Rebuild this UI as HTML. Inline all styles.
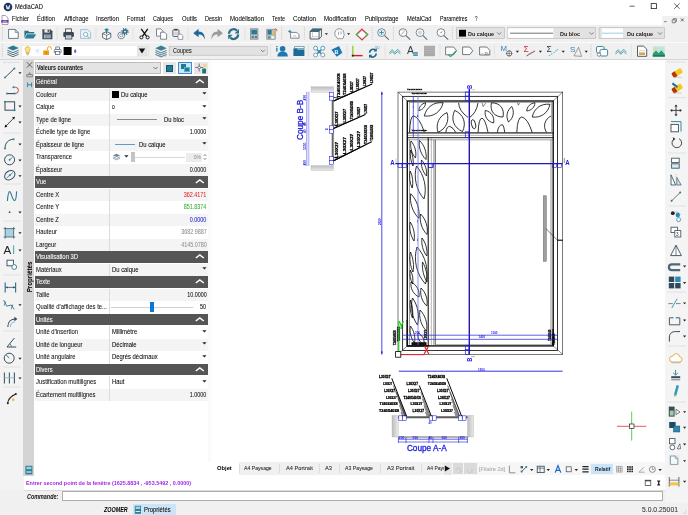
<!DOCTYPE html>
<html lang="fr"><head><meta charset="utf-8"><title>MédiaCAD</title><style>
html,body{margin:0;padding:0;background:#fff}
.t{-webkit-text-stroke:.06px currentColor}
body{width:688px;height:515px;position:relative;overflow:hidden;font-family:"Liberation Sans",sans-serif}
.a{position:absolute;display:block}
.t{position:absolute;white-space:nowrap;display:block}
#w{position:absolute;left:0;top:0;width:688px;height:515px;will-change:transform}
svg{overflow:visible}
svg text{font-family:"Liberation Sans",sans-serif}
</style></head><body>
<div id="w">
<div class="a" style="left:0px;top:0px;width:688px;height:24.5px;background:#fff;"></div>
<div class="a" style="left:0px;top:24.5px;width:688px;height:35px;background:#f0f0f0;"></div>
<div class="a" style="left:0px;top:41.7px;width:688px;height:0.6px;background:#d9d9d9;"></div>
<div class="a" style="left:0px;top:42.3px;width:688px;height:0.6px;background:#fbfbfb;"></div>
<div class="a" style="left:0px;top:59.3px;width:688px;height:0.7px;background:#d5d5d5;"></div>
<div class="a" style="left:0px;top:60px;width:23.5px;height:443px;background:#f3f3f3;"></div>
<div class="a" style="left:23.3px;top:60px;width:11.1px;height:415.5px;background:#d4d4d4;"></div>
<div class="a" style="left:34.5px;top:60px;width:173.7px;height:415.5px;background:#fff;"></div>
<div class="a" style="left:208.2px;top:60px;width:2.6px;height:402px;background:#fafafa;"></div>
<div class="a" style="left:665.4px;top:60px;width:22.6px;height:443px;background:#f4f4f4;"></div>
<div class="a" style="left:0px;top:503px;width:688px;height:12px;background:#f0f0f0;"></div>
<div class="a" style="left:0px;top:490.2px;width:665.4px;height:12.8px;background:#f0f0f0;"></div>
<div class="a" style="left:23.5px;top:475.5px;width:641.9px;height:14.5px;background:#fff;"></div>
<div class="a" style="left:23.5px;top:489.8px;width:641.9px;height:0.5px;background:#dcdcdc;"></div>
<div class="a" style="left:210.8px;top:462.3px;width:454.6px;height:12.4px;background:#f0f0f0;"></div>
<div class="a" style="left:452.4px;top:462.3px;width:213px;height:12.4px;background:#f6f6f6;"></div>
<svg class="a" style="left:3px;top:1.5px;" width="10" height="10" viewBox="0 0 10 10"><circle cx="5" cy="5" r="4.3" fill="#1d3465"/><path d="M3.2 3 L4.2 7.2 L5 4.6 L5.8 7.2 L6.8 3" stroke="#fff" stroke-width="0.9" fill="none"/></svg>
<span class="t" style="top:4.03px;font-size:6.4px;line-height:6.4px;color:#000;left:15.00px;transform:scaleX(0.9);transform-origin:left center;">MédiaCAD</span>
<svg class="a" style="left:625px;top:0px;" width="63" height="13" viewBox="0 0 63 13"><path d="M4.5 6.2h5.2" stroke="#222" stroke-width="0.7"/><rect x="26.2" y="3.6" width="5.2" height="5" fill="none" stroke="#222" stroke-width="0.8"/><path d="M49.2 3.4l5.4 5.4M54.6 3.4l-5.4 5.4" stroke="#222" stroke-width="0.7"/></svg>
<svg class="a" style="left:0.5px;top:14.5px;" width="8" height="10" viewBox="0 0 8 10"><path d="M1 .5h3.6l2.4 2.4v6.6h-6z" fill="#fff" stroke="#6a5aa0" stroke-width="0.6"/><rect x=".3" y="5" width="7.2" height="2.6" fill="#6a3fa0"/><path d="M2 6.3h3.8" stroke="#fff" stroke-width=".6"/></svg>
<span class="t" style="top:16.45px;font-size:6.5px;line-height:6.5px;color:#000;left:12.00px;transform:scaleX(0.871);transform-origin:left center;">Fichier</span>
<span class="t" style="top:16.45px;font-size:6.5px;line-height:6.5px;color:#000;left:37.00px;transform:scaleX(0.906);transform-origin:left center;">Édition</span>
<span class="t" style="top:16.45px;font-size:6.5px;line-height:6.5px;color:#000;left:63.50px;transform:scaleX(0.908);transform-origin:left center;">Affichage</span>
<span class="t" style="top:16.45px;font-size:6.5px;line-height:6.5px;color:#000;left:96.00px;transform:scaleX(0.922);transform-origin:left center;">Insertion</span>
<span class="t" style="top:16.45px;font-size:6.5px;line-height:6.5px;color:#000;left:127.00px;transform:scaleX(0.874);transform-origin:left center;">Format</span>
<span class="t" style="top:16.45px;font-size:6.5px;line-height:6.5px;color:#000;left:153.00px;transform:scaleX(0.838);transform-origin:left center;">Calques</span>
<span class="t" style="top:16.45px;font-size:6.5px;line-height:6.5px;color:#000;left:182.00px;transform:scaleX(0.902);transform-origin:left center;">Outils</span>
<span class="t" style="top:16.45px;font-size:6.5px;line-height:6.5px;color:#000;left:205.00px;transform:scaleX(0.855);transform-origin:left center;">Dessin</span>
<span class="t" style="top:16.45px;font-size:6.5px;line-height:6.5px;color:#000;left:230.00px;transform:scaleX(0.932);transform-origin:left center;">Modélisation</span>
<span class="t" style="top:16.45px;font-size:6.5px;line-height:6.5px;color:#000;left:272.00px;transform:scaleX(0.836);transform-origin:left center;">Texte</span>
<span class="t" style="top:16.45px;font-size:6.5px;line-height:6.5px;color:#000;left:293.00px;transform:scaleX(0.950);transform-origin:left center;">Cotation</span>
<span class="t" style="top:16.45px;font-size:6.5px;line-height:6.5px;color:#000;left:324.00px;transform:scaleX(0.937);transform-origin:left center;">Modification</span>
<span class="t" style="top:16.45px;font-size:6.5px;line-height:6.5px;color:#000;left:365.00px;transform:scaleX(0.891);transform-origin:left center;">Publipostage</span>
<span class="t" style="top:16.45px;font-size:6.5px;line-height:6.5px;color:#000;left:406.50px;transform:scaleX(0.880);transform-origin:left center;">MétalCad</span>
<span class="t" style="top:16.45px;font-size:6.5px;line-height:6.5px;color:#000;left:439.50px;transform:scaleX(0.818);transform-origin:left center;">Paramètres</span>
<span class="t" style="top:16.45px;font-size:6.5px;line-height:6.5px;color:#000;left:475.00px;transform:scaleX(0.690);transform-origin:left center;">?</span>
<div class="a" style="left:661.5px;top:15.5px;width:26.5px;height:9px;background:#f1f1f1;"></div>
<svg class="a" style="left:661px;top:15px;" width="27" height="10" viewBox="0 0 27 10"><path d="M3.2 6.6h2.4" stroke="#444" stroke-width=".7"/><path d="M11.2 4.8h3v3h-3zM12.4 4.8v-1.2h3v3h-1.2" fill="none" stroke="#345" stroke-width=".6"/><path d="M19.8 3.4l3 3M22.8 3.4l-3 3" stroke="#333" stroke-width=".7"/></svg>
<div class="a" style="left:35px;top:61.8px;width:125.8px;height:12.4px;background:#e4e4e4;border:0.5px solid #bdbdbd;box-sizing:border-box;"></div>
<span class="t" style="top:64.93px;font-size:6.4px;line-height:6.4px;color:#111;font-weight:bold;-webkit-text-stroke:0;left:36.80px;transform:scaleX(0.835);transform-origin:left center;">Valeurs courantes</span>
<svg class="a" style="left:152px;top:65.3px;" width="7" height="6" viewBox="0 0 7 6"><path d="M1.5 2l2 2 2-2" fill="none" stroke="#444" stroke-width=".7"/></svg>
<div class="a" style="left:163px;top:62px;width:12.6px;height:12.2px;background:#e6e6e6;"></div>
<div class="a" style="left:165.8px;top:64.8px;width:7px;height:7px;background:#1f7a96;border:0.7px solid #16566b;box-sizing:border-box;"></div>
<div class="a" style="left:178px;top:61.6px;width:14px;height:12.8px;background:#cfe6f7;border:0.7px solid #3c8dd0;box-sizing:border-box;"></div>
<div class="a" style="left:180.6px;top:63.6px;width:5.6px;height:5.2px;background:#1f7a96;"></div>
<div class="a" style="left:184.4px;top:67.2px;width:5.6px;height:5.2px;background:#1f7a96;border:0.5px solid #5fb0c8;box-sizing:border-box"></div>
<div class="a" style="left:193.8px;top:62px;width:13.8px;height:12.2px;background:#e9e6ea;"></div>
<svg class="a" style="left:194px;top:61.8px;" width="14" height="13" viewBox="0 0 14 13"><path d="M5.2 1.5v8M1.2 5.5h8" stroke="#333" stroke-width=".6"/><circle cx="5.2" cy="5.5" r="1.3" fill="#fff" stroke="#333" stroke-width=".5"/><rect x="8.2" y="6.4" width="3.8" height="5" rx=".6" fill="#177a72"/><rect x="9" y="2" width="3.6" height="3" fill="#f3cf7a" opacity=".8"/></svg>
<svg class="a" style="left:24.5px;top:60.5px;" width="9" height="8" viewBox="0 0 9 8"><path d="M1.8 1.2l5.4 5.4M7.2 1.2l-5.4 5.4" stroke="#444" stroke-width=".8"/></svg>
<svg class="a" style="left:24.5px;top:70px;" width="9" height="8" viewBox="0 0 9 8"><path d="M1.8 6.8h5.6v-2.2h-5.6zM3.6 4.6l1-2 1 2" fill="none" stroke="#555" stroke-width=".6"/></svg>
<svg class="a" style="left:24.5px;top:80px;" width="9" height="9" viewBox="0 0 9 9"><path d="M2.6 2.5v4.6M6.6 2.5v4.6M2.6 4.8h4" stroke="#2e8aa5" stroke-width="1"/></svg>
<svg class="a" style="left:24.3px;top:465px;" width="10" height="10" viewBox="0 0 10 10"><rect x="1.4" y=".8" width="7" height="8.6" fill="#2f7f97"/><rect x="2.4" y="1.8" width="5" height="2.4" fill="#9ed0de"/><rect x="2.4" y="6.4" width="5" height="1.2" fill="#d7eef4"/></svg>
<span class="t" style="left:29.6px;top:277px;font-size:7.4px;line-height:8px;font-weight:bold;color:#000;transform:translate(-50%,-50%) rotate(-90deg) scaleX(.84);transform-origin:center">Propriétés</span>
<div class="a" style="left:34.8px;top:76.2px;width:173.3px;height:11.7px;background:#555555;"></div>
<span class="t" style="top:79.23px;font-size:6.4px;line-height:6.4px;color:#fff;left:36.30px;transform:scaleX(0.92);transform-origin:left center;">Général</span>
<svg class="a" style="left:194.8px;top:79.3px;" width="10" height="5.2" viewBox="0 0 10 5.2"><path d="M.8 4l4-3 4 3" fill="none" stroke="#fff" stroke-width="1.5"/></svg>
<div class="a" style="left:34.8px;top:88.5px;width:173.3px;height:12.5px;background:#f4f4f4;"></div>
<span class="t" style="top:91.73px;font-size:6.4px;line-height:6.4px;color:#111;left:36.30px;transform:scaleX(0.92);transform-origin:left center;">Couleur</span>
<div class="a" style="left:112.4px;top:91.10000000000001px;width:7px;height:7px;background:#000;"></div>
<span class="t" style="top:91.73px;font-size:6.4px;line-height:6.4px;color:#000;left:121.00px;transform:scaleX(0.92);transform-origin:left center;">Du calque</span>
<svg class="a" style="left:201.6px;top:92.2px;" width="5" height="3" viewBox="0 0 5 3"><path d="M.3 .3h4.2l-2.1 2.3z" fill="#222"/></svg>
<div class="a" style="left:109.4px;top:88.5px;width:0.5px;height:12.5px;background:#dcdcdc;"></div>
<div class="a" style="left:34.8px;top:101.0px;width:173.3px;height:12.5px;background:#fff;"></div>
<span class="t" style="top:104.23px;font-size:6.4px;line-height:6.4px;color:#111;left:36.30px;transform:scaleX(0.92);transform-origin:left center;">Calque</span>
<span class="t" style="top:105.08px;font-size:5.4px;line-height:5.4px;color:#000;left:112.00px;transform:scaleX(0.92);transform-origin:left center;">0</span>
<svg class="a" style="left:201.6px;top:104.7px;" width="5" height="3" viewBox="0 0 5 3"><path d="M.3 .3h4.2l-2.1 2.3z" fill="#222"/></svg>
<div class="a" style="left:109.4px;top:101.0px;width:0.5px;height:12.5px;background:#dcdcdc;"></div>
<div class="a" style="left:34.8px;top:113.5px;width:173.3px;height:12.5px;background:#f4f4f4;"></div>
<span class="t" style="top:116.73px;font-size:6.4px;line-height:6.4px;color:#111;left:36.30px;transform:scaleX(0.92);transform-origin:left center;">Type de ligne</span>
<div class="a" style="left:117px;top:119.2px;width:40px;height:1px;background:#8a8a8a;"></div>
<span class="t" style="top:116.73px;font-size:6.4px;line-height:6.4px;color:#000;left:164.00px;transform:scaleX(0.92);transform-origin:left center;">Du bloc</span>
<svg class="a" style="left:201.6px;top:117.2px;" width="5" height="3" viewBox="0 0 5 3"><path d="M.3 .3h4.2l-2.1 2.3z" fill="#222"/></svg>
<div class="a" style="left:109.4px;top:113.5px;width:0.5px;height:12.5px;background:#dcdcdc;"></div>
<div class="a" style="left:34.8px;top:126.0px;width:173.3px;height:12.5px;background:#fff;"></div>
<span class="t" style="top:129.23px;font-size:6.4px;line-height:6.4px;color:#111;left:36.30px;transform:scaleX(0.92);transform-origin:left center;">Échelle type de ligne</span>
<span class="t" style="top:129.32px;font-size:6.3px;line-height:6.3px;color:#111;right:481.60px;transform:scaleX(0.86);transform-origin:right center;">1.0000</span>
<div class="a" style="left:109.4px;top:126.0px;width:0.5px;height:12.5px;background:#dcdcdc;"></div>
<div class="a" style="left:34.8px;top:138.5px;width:173.3px;height:12.5px;background:#f4f4f4;"></div>
<span class="t" style="top:141.73px;font-size:6.4px;line-height:6.4px;color:#111;left:36.30px;transform:scaleX(0.92);transform-origin:left center;">Épaisseur de ligne</span>
<div class="a" style="left:114.6px;top:144.39999999999998px;width:20px;height:0.7px;background:#5a9fd0;"></div>
<span class="t" style="top:141.73px;font-size:6.4px;line-height:6.4px;color:#000;left:138.80px;transform:scaleX(0.92);transform-origin:left center;">Du calque</span>
<svg class="a" style="left:201.6px;top:142.2px;" width="5" height="3" viewBox="0 0 5 3"><path d="M.3 .3h4.2l-2.1 2.3z" fill="#222"/></svg>
<div class="a" style="left:109.4px;top:138.5px;width:0.5px;height:12.5px;background:#dcdcdc;"></div>
<div class="a" style="left:34.8px;top:151.0px;width:173.3px;height:12.5px;background:#fff;"></div>
<span class="t" style="top:154.23px;font-size:6.4px;line-height:6.4px;color:#111;left:36.30px;transform:scaleX(0.92);transform-origin:left center;">Transparence</span>
<svg class="a" style="left:112px;top:153.2px;" width="9" height="8" viewBox="0 0 9 8"><path d="M4.5 .8l3.6 1.6-3.6 1.6L.9 2.4z" fill="#6f8796"/><path d="M.9 3.8l3.6 1.6 3.6-1.6M.9 5.2l3.6 1.6 3.6-1.6" fill="none" stroke="#6f8796" stroke-width=".7"/></svg>
<svg class="a" style="left:124px;top:155.0px;" width="5" height="3" viewBox="0 0 5 3"><path d="M.3 .3h4.2l-2.1 2.3z" fill="#222"/></svg>
<div class="a" style="left:135px;top:156.79999999999998px;width:50px;height:0.8px;background:#d8d8d8;"></div>
<div class="a" style="left:131.3px;top:152.2px;width:4px;height:10px;background:#c4c4c4;"></div>
<div class="a" style="left:186px;top:152.6px;width:16px;height:9.2px;background:#ececec;"></div>
<span class="t" style="top:154.91px;font-size:5.6px;line-height:5.6px;color:#999;right:487.00px;transform:scaleX(0.9);transform-origin:right center;">0%</span>
<svg class="a" style="left:202.5px;top:153.2px;" width="4" height="8" viewBox="0 0 4 8"><path d="M.6 3l1.4-1.6L3.4 3M.6 5l1.4 1.6L3.4 5" fill="none" stroke="#555" stroke-width=".6"/></svg>
<div class="a" style="left:109.4px;top:151.0px;width:0.5px;height:12.5px;background:#dcdcdc;"></div>
<div class="a" style="left:34.8px;top:163.5px;width:173.3px;height:12.5px;background:#f4f4f4;"></div>
<span class="t" style="top:166.73px;font-size:6.4px;line-height:6.4px;color:#111;left:36.30px;transform:scaleX(0.92);transform-origin:left center;">Épaisseur</span>
<span class="t" style="top:166.82px;font-size:6.3px;line-height:6.3px;color:#111;right:481.60px;transform:scaleX(0.86);transform-origin:right center;">0.0000</span>
<div class="a" style="left:109.4px;top:163.5px;width:0.5px;height:12.5px;background:#dcdcdc;"></div>
<div class="a" style="left:34.8px;top:176.2px;width:173.3px;height:11.7px;background:#555555;"></div>
<span class="t" style="top:179.23px;font-size:6.4px;line-height:6.4px;color:#fff;left:36.30px;transform:scaleX(0.92);transform-origin:left center;">Vue</span>
<svg class="a" style="left:194.8px;top:179.29999999999998px;" width="10" height="5.2" viewBox="0 0 10 5.2"><path d="M.8 4l4-3 4 3" fill="none" stroke="#fff" stroke-width="1.5"/></svg>
<div class="a" style="left:34.8px;top:188.5px;width:173.3px;height:12.5px;background:#f4f4f4;"></div>
<span class="t" style="top:191.73px;font-size:6.4px;line-height:6.4px;color:#111;left:36.30px;transform:scaleX(0.92);transform-origin:left center;">Centre X</span>
<span class="t" style="top:191.82px;font-size:6.3px;line-height:6.3px;color:#e0262c;right:481.60px;transform:scaleX(0.86);transform-origin:right center;">362.4171</span>
<div class="a" style="left:109.4px;top:188.5px;width:0.5px;height:12.5px;background:#dcdcdc;"></div>
<div class="a" style="left:34.8px;top:201.0px;width:173.3px;height:12.5px;background:#fff;"></div>
<span class="t" style="top:204.23px;font-size:6.4px;line-height:6.4px;color:#111;left:36.30px;transform:scaleX(0.92);transform-origin:left center;">Centre Y</span>
<span class="t" style="top:204.32px;font-size:6.3px;line-height:6.3px;color:#35b335;right:481.60px;transform:scaleX(0.86);transform-origin:right center;">851.8374</span>
<div class="a" style="left:109.4px;top:201.0px;width:0.5px;height:12.5px;background:#dcdcdc;"></div>
<div class="a" style="left:34.8px;top:213.5px;width:173.3px;height:12.5px;background:#f4f4f4;"></div>
<span class="t" style="top:216.73px;font-size:6.4px;line-height:6.4px;color:#111;left:36.30px;transform:scaleX(0.92);transform-origin:left center;">Centre Z</span>
<span class="t" style="top:216.82px;font-size:6.3px;line-height:6.3px;color:#2222dd;right:481.60px;transform:scaleX(0.86);transform-origin:right center;">0.0000</span>
<div class="a" style="left:109.4px;top:213.5px;width:0.5px;height:12.5px;background:#dcdcdc;"></div>
<div class="a" style="left:34.8px;top:226.0px;width:173.3px;height:12.5px;background:#fff;"></div>
<span class="t" style="top:229.23px;font-size:6.4px;line-height:6.4px;color:#111;left:36.30px;transform:scaleX(0.92);transform-origin:left center;">Hauteur</span>
<span class="t" style="top:229.32px;font-size:6.3px;line-height:6.3px;color:#909090;right:481.60px;transform:scaleX(0.86);transform-origin:right center;">3682.9887</span>
<div class="a" style="left:109.4px;top:226.0px;width:0.5px;height:12.5px;background:#dcdcdc;"></div>
<div class="a" style="left:34.8px;top:238.5px;width:173.3px;height:12.5px;background:#f4f4f4;"></div>
<span class="t" style="top:241.73px;font-size:6.4px;line-height:6.4px;color:#111;left:36.30px;transform:scaleX(0.92);transform-origin:left center;">Largeur</span>
<span class="t" style="top:241.82px;font-size:6.3px;line-height:6.3px;color:#909090;right:481.60px;transform:scaleX(0.86);transform-origin:right center;">4145.0780</span>
<div class="a" style="left:109.4px;top:238.5px;width:0.5px;height:12.5px;background:#dcdcdc;"></div>
<div class="a" style="left:34.8px;top:251.2px;width:173.3px;height:11.7px;background:#555555;"></div>
<span class="t" style="top:254.23px;font-size:6.4px;line-height:6.4px;color:#fff;left:36.30px;transform:scaleX(0.92);transform-origin:left center;">Visualisation 3D</span>
<svg class="a" style="left:194.8px;top:254.29999999999998px;" width="10" height="5.2" viewBox="0 0 10 5.2"><path d="M.8 4l4-3 4 3" fill="none" stroke="#fff" stroke-width="1.5"/></svg>
<div class="a" style="left:34.8px;top:263.5px;width:173.3px;height:12.5px;background:#f4f4f4;"></div>
<span class="t" style="top:266.73px;font-size:6.4px;line-height:6.4px;color:#111;left:36.30px;transform:scaleX(0.92);transform-origin:left center;">Matériaux</span>
<span class="t" style="top:266.73px;font-size:6.4px;line-height:6.4px;color:#000;left:112.00px;transform:scaleX(0.92);transform-origin:left center;">Du calque</span>
<svg class="a" style="left:201.6px;top:267.2px;" width="5" height="3" viewBox="0 0 5 3"><path d="M.3 .3h4.2l-2.1 2.3z" fill="#222"/></svg>
<div class="a" style="left:109.4px;top:263.5px;width:0.5px;height:12.5px;background:#dcdcdc;"></div>
<div class="a" style="left:34.8px;top:276.2px;width:173.3px;height:11.7px;background:#555555;"></div>
<span class="t" style="top:279.23px;font-size:6.4px;line-height:6.4px;color:#fff;left:36.30px;transform:scaleX(0.92);transform-origin:left center;">Texte</span>
<svg class="a" style="left:194.8px;top:279.3px;" width="10" height="5.2" viewBox="0 0 10 5.2"><path d="M.8 4l4-3 4 3" fill="none" stroke="#fff" stroke-width="1.5"/></svg>
<div class="a" style="left:34.8px;top:288.5px;width:173.3px;height:12.5px;background:#f4f4f4;"></div>
<span class="t" style="top:291.73px;font-size:6.4px;line-height:6.4px;color:#111;left:36.30px;transform:scaleX(0.92);transform-origin:left center;">Taille</span>
<span class="t" style="top:291.82px;font-size:6.3px;line-height:6.3px;color:#111;right:481.60px;transform:scaleX(0.86);transform-origin:right center;">10.0000</span>
<div class="a" style="left:109.4px;top:288.5px;width:0.5px;height:12.5px;background:#dcdcdc;"></div>
<div class="a" style="left:34.8px;top:301.0px;width:173.3px;height:12.5px;background:#fff;"></div>
<span class="t" style="top:304.23px;font-size:6.4px;line-height:6.4px;color:#111;left:36.30px;transform:scaleX(0.92);transform-origin:left center;">Qualité d&#x27;affichage des te...</span>
<div class="a" style="left:111px;top:306.8px;width:82px;height:0.8px;background:#d0d0d0;"></div>
<div class="a" style="left:149.6px;top:302.4px;width:4.6px;height:9.8px;background:#0a78d7;"></div>
<span class="t" style="top:304.32px;font-size:6.3px;line-height:6.3px;color:#000;right:481.60px;transform:scaleX(0.86);transform-origin:right center;">50</span>
<div class="a" style="left:109.4px;top:301.0px;width:0.5px;height:12.5px;background:#dcdcdc;"></div>
<div class="a" style="left:34.8px;top:313.7px;width:173.3px;height:11.7px;background:#555555;"></div>
<span class="t" style="top:316.73px;font-size:6.4px;line-height:6.4px;color:#fff;left:36.30px;transform:scaleX(0.92);transform-origin:left center;">Unités</span>
<svg class="a" style="left:194.8px;top:316.8px;" width="10" height="5.2" viewBox="0 0 10 5.2"><path d="M.8 4l4-3 4 3" fill="none" stroke="#fff" stroke-width="1.5"/></svg>
<div class="a" style="left:34.8px;top:326.0px;width:173.3px;height:12.5px;background:#fff;"></div>
<span class="t" style="top:329.23px;font-size:6.4px;line-height:6.4px;color:#111;left:36.30px;transform:scaleX(0.92);transform-origin:left center;">Unité d&#x27;insertion</span>
<span class="t" style="top:329.23px;font-size:6.4px;line-height:6.4px;color:#000;left:112.00px;transform:scaleX(0.92);transform-origin:left center;">Millimètre</span>
<svg class="a" style="left:201.6px;top:329.7px;" width="5" height="3" viewBox="0 0 5 3"><path d="M.3 .3h4.2l-2.1 2.3z" fill="#222"/></svg>
<div class="a" style="left:109.4px;top:326.0px;width:0.5px;height:12.5px;background:#dcdcdc;"></div>
<div class="a" style="left:34.8px;top:338.5px;width:173.3px;height:12.5px;background:#f4f4f4;"></div>
<span class="t" style="top:341.73px;font-size:6.4px;line-height:6.4px;color:#111;left:36.30px;transform:scaleX(0.92);transform-origin:left center;">Unité de longueur</span>
<span class="t" style="top:341.73px;font-size:6.4px;line-height:6.4px;color:#000;left:112.00px;transform:scaleX(0.92);transform-origin:left center;">Décimale</span>
<svg class="a" style="left:201.6px;top:342.2px;" width="5" height="3" viewBox="0 0 5 3"><path d="M.3 .3h4.2l-2.1 2.3z" fill="#222"/></svg>
<div class="a" style="left:109.4px;top:338.5px;width:0.5px;height:12.5px;background:#dcdcdc;"></div>
<div class="a" style="left:34.8px;top:351.0px;width:173.3px;height:12.5px;background:#fff;"></div>
<span class="t" style="top:354.23px;font-size:6.4px;line-height:6.4px;color:#111;left:36.30px;transform:scaleX(0.92);transform-origin:left center;">Unité angulaire</span>
<span class="t" style="top:354.23px;font-size:6.4px;line-height:6.4px;color:#000;left:112.00px;transform:scaleX(0.92);transform-origin:left center;">Degrés décimaux</span>
<svg class="a" style="left:201.6px;top:354.7px;" width="5" height="3" viewBox="0 0 5 3"><path d="M.3 .3h4.2l-2.1 2.3z" fill="#222"/></svg>
<div class="a" style="left:109.4px;top:351.0px;width:0.5px;height:12.5px;background:#dcdcdc;"></div>
<div class="a" style="left:34.8px;top:363.7px;width:173.3px;height:11.7px;background:#555555;"></div>
<span class="t" style="top:366.73px;font-size:6.4px;line-height:6.4px;color:#fff;left:36.30px;transform:scaleX(0.92);transform-origin:left center;">Divers</span>
<svg class="a" style="left:194.8px;top:366.8px;" width="10" height="5.2" viewBox="0 0 10 5.2"><path d="M.8 4l4-3 4 3" fill="none" stroke="#fff" stroke-width="1.5"/></svg>
<div class="a" style="left:34.8px;top:376.0px;width:173.3px;height:12.5px;background:#fff;"></div>
<span class="t" style="top:379.23px;font-size:6.4px;line-height:6.4px;color:#111;left:36.30px;transform:scaleX(0.92);transform-origin:left center;">Justification multilignes</span>
<span class="t" style="top:379.23px;font-size:6.4px;line-height:6.4px;color:#000;left:112.00px;transform:scaleX(0.92);transform-origin:left center;">Haut</span>
<svg class="a" style="left:201.6px;top:379.7px;" width="5" height="3" viewBox="0 0 5 3"><path d="M.3 .3h4.2l-2.1 2.3z" fill="#222"/></svg>
<div class="a" style="left:109.4px;top:376.0px;width:0.5px;height:12.5px;background:#dcdcdc;"></div>
<div class="a" style="left:34.8px;top:388.5px;width:173.3px;height:12.5px;background:#f4f4f4;"></div>
<span class="t" style="top:391.73px;font-size:6.4px;line-height:6.4px;color:#111;left:36.30px;transform:scaleX(0.92);transform-origin:left center;">Écartement  multilignes</span>
<span class="t" style="top:391.82px;font-size:6.3px;line-height:6.3px;color:#111;right:481.60px;transform:scaleX(0.86);transform-origin:right center;">1.0000</span>
<div class="a" style="left:109.4px;top:388.5px;width:0.5px;height:12.5px;background:#dcdcdc;"></div>
<div class="a" style="left:211px;top:462.3px;width:27.5px;height:12.4px;background:#fff;"></div>
<span class="t" style="top:466.16px;font-size:5.9px;line-height:5.9px;color:#000;font-weight:bold;-webkit-text-stroke:0;left:216.70px;transform:scaleX(0.983);transform-origin:left center;">Objet</span>
<span class="t" style="top:466.16px;font-size:5.9px;line-height:5.9px;color:#222;left:244.30px;transform:scaleX(0.872);transform-origin:left center;">A4 Paysage</span>
<span class="t" style="top:466.16px;font-size:5.9px;line-height:5.9px;color:#222;left:285.70px;transform:scaleX(0.963);transform-origin:left center;">A4 Portrait</span>
<span class="t" style="top:466.16px;font-size:5.9px;line-height:5.9px;color:#222;left:325.00px;transform:scaleX(0.970);transform-origin:left center;">A3</span>
<span class="t" style="top:466.16px;font-size:5.9px;line-height:5.9px;color:#222;left:345.00px;transform:scaleX(0.881);transform-origin:left center;">A3 Paysage</span>
<span class="t" style="top:466.16px;font-size:5.9px;line-height:5.9px;color:#222;left:386.70px;transform:scaleX(0.981);transform-origin:left center;">A3 Portrait</span>
<span class="t" style="top:466.16px;font-size:5.9px;line-height:5.9px;color:#222;left:427.00px;transform:scaleX(0.843);transform-origin:left center;">A4 Pays</span>
<div class="a" style="left:238.5px;top:463.8px;width:0.5px;height:9.4px;background:#dcdcdc;"></div>
<div class="a" style="left:279px;top:463.8px;width:0.5px;height:9.4px;background:#dcdcdc;"></div>
<div class="a" style="left:319px;top:463.8px;width:0.5px;height:9.4px;background:#dcdcdc;"></div>
<div class="a" style="left:338.5px;top:463.8px;width:0.5px;height:9.4px;background:#dcdcdc;"></div>
<div class="a" style="left:380px;top:463.8px;width:0.5px;height:9.4px;background:#dcdcdc;"></div>
<div class="a" style="left:420.5px;top:463.8px;width:0.5px;height:9.4px;background:#dcdcdc;"></div>
<div class="a" style="left:443.5px;top:462.6px;width:8.5px;height:12px;background:#e6e6e6;"></div>
<svg class="a" style="left:443.6px;top:465.4px;" width="7" height="7" viewBox="0 0 7 7"><path d="M.8 .4l5.2 3-5.2 3z" fill="#111"/></svg>
<div class="a" style="left:452.6px;top:463.4px;width:10px;height:10.2px;background:#dadada;"></div>
<div class="a" style="left:464.2px;top:463.4px;width:12.4px;height:10.2px;background:#dadada;"></div>
<svg class="a" style="left:453.6px;top:464px;" width="22.4" height="10.4" viewBox="0 0 22.4 10.4"><path d="M2.5 6.5a2.3 2.3 0 1 1 2.3 2M13.5 6.5a2.3 2.3 0 1 0 4-1.6" fill="none" stroke="#c2c2c2" stroke-width=".8"/></svg>
<span class="t" style="top:466.94px;font-size:5.8px;line-height:5.8px;color:#a9a9a9;left:478.80px;transform:scaleX(0.968);transform-origin:left center;">[Filaire 2d]</span>
<svg class="a" style="left:506px;top:463px;" width="156" height="13" viewBox="0 0 156 13">
<path d="M3.4 2.6v7.2h6" fill="none" stroke="#666" stroke-width=".7"/>
<path d="M15.2 9l5.4-5.4" stroke="#333" stroke-width=".8"/><circle cx="15.6" cy="8.6" r="1.1" fill="#2e8aa5"/><circle cx="20.2" cy="4" r="1.1" fill="#2e8aa5"/><rect x="14.6" y="3" width="2.4" height="2.4" fill="#555"/>
<path d="M24 6l1.7 2 1.7-2z" fill="#222"/>
<rect x="31.2" y="3.2" width="7" height="6.4" fill="none" stroke="#345" stroke-width=".8"/><path d="M31.2 5.2h7M34 3.2v6.4" stroke="#345" stroke-width=".6"/>
<path d="M40.6 6l1.7 2 1.7-2z" fill="#222"/>
<path d="M49.2 9.6l2.8-7 2.8 7M50.4 7.4h3.2" fill="none" stroke="#1767c9" stroke-width="1.2"/>
<rect x="60.2" y="3.8" width="5" height="5" fill="none" stroke="#445" stroke-width=".7"/>
<path d="M68.6 6l1.7 2 1.7-2z" fill="#222"/>
<path d="M76.4 3.6h6.2M76.4 6.2h6.2M76.4 8.8h6.2" stroke="#222" stroke-width="1.2"/>
<g stroke="#777" stroke-width=".5"><path d="M110.4 3.4h5.8M110.4 5.3h5.8M110.4 7.2h5.8M110.4 9.1h5.8M110.6 3.2v6M112.5 3.2v6M114.4 3.2v6M116.2 3.2v6"/></g>
<g fill="#222"><rect x="121" y="3.2" width="1.6" height="1.6"/><rect x="123.2" y="3.2" width="1.6" height="1.6"/><rect x="125.4" y="3.2" width="1.6" height="1.6"/><rect x="121" y="5.4" width="1.6" height="1.6"/><rect x="123.2" y="5.4" width="1.6" height="1.6"/><rect x="125.4" y="5.4" width="1.6" height="1.6"/><rect x="121" y="7.6" width="1.6" height="1.6"/><rect x="123.2" y="7.6" width="1.6" height="1.6"/><rect x="125.4" y="7.6" width="1.6" height="1.6"/></g>
<path d="M133 9.2h5.6M133 9.2l5-5" stroke="#777" stroke-width=".6" fill="none"/>
<circle cx="146.4" cy="6.4" r="3" fill="none" stroke="#666" stroke-width=".7"/><path d="M146.4 4.4v2h1.8" stroke="#666" stroke-width=".6" fill="none"/>
<path d="M152.4 6l1.7 2 1.7-2z" fill="#222"/>
</svg>
<div class="a" style="left:591px;top:463.6px;width:22px;height:10.8px;background:#cce4f7;"></div>
<span class="t" style="top:467.11px;font-size:5.6px;line-height:5.6px;color:#123;font-weight:bold;-webkit-text-stroke:0;left:595.20px;transform:scaleX(0.9);transform-origin:left center;">Relatif</span>
<svg class="a" style="left:644px;top:478px;" width="20" height="10" viewBox="0 0 20 10"><rect x="1.2" y="2.2" width="5.6" height="5.4" fill="none" stroke="#333" stroke-width=".7"/><path d="M1.2 2.8h5.6" stroke="#333" stroke-width="1"/><path d="M13 2.4h3.4l-1.3 2.6 1.3 2.6H13l1.3-2.6z" fill="#222"/></svg>
<span class="t" style="top:480.20px;font-size:6.2px;line-height:6.2px;color:#a028e0;font-weight:bold;-webkit-text-stroke:0;left:26.00px;transform:scaleX(0.874);transform-origin:left center;">Entrer second point de la fenêtre (1625.8834 , -953.5492 , 0.0000)</span>
<span class="t" style="top:493.72px;font-size:6.3px;line-height:6.3px;color:#111;font-weight:bold;-webkit-text-stroke:0;font-style:italic;left:27.00px;transform:scaleX(0.86);transform-origin:left center;">Commande:</span>
<div class="a" style="left:62px;top:491.2px;width:600.6px;height:9.8px;background:#fff;border:0.6px solid #adadad;box-sizing:border-box;"></div>
<span class="t" style="top:506.72px;font-size:6.3px;line-height:6.3px;color:#000;font-weight:bold;-webkit-text-stroke:0;font-style:italic;left:104.00px;transform:scaleX(0.86);transform-origin:left center;">ZOOMER</span>
<div class="a" style="left:133px;top:504px;width:43.4px;height:11px;background:#cce4f7;"></div>
<svg class="a" style="left:134px;top:504.6px;" width="8" height="10" viewBox="0 0 8 10"><rect x=".8" y=".8" width="6.2" height="8" fill="#2f7f97"/><rect x="1.6" y="1.6" width="4.6" height="2.4" fill="#a5d5e2"/><rect x="1.6" y="6" width="4.6" height="1" fill="#d7eef4"/></svg>
<span class="t" style="top:506.55px;font-size:6.5px;line-height:6.5px;color:#000;left:143.60px;transform:scaleX(0.898);transform-origin:left center;">Propriétés</span>
<span class="t" style="top:506.66px;font-size:6.6px;line-height:6.6px;color:#333;left:642.40px;transform:scaleX(1.033);transform-origin:left center;">5.0.0.25001</span>
<svg class="a" style="left:680px;top:507px;" width="8" height="8" viewBox="0 0 8 8"><g fill="#bbb"><rect x="5.5" y="5.5" width="1" height="1"/><rect x="3.5" y="5.5" width="1" height="1"/><rect x="5.5" y="3.5" width="1" height="1"/></g></svg>
<svg class="a" style="left:0;top:0" width="688" height="515" viewBox="0 0 688 515" fill="none"><rect x="398.00" y="92.10" width="164.70" height="262.30" fill="none" stroke="#222" stroke-width="0.6"/><rect x="402.60" y="96.40" width="154.90" height="254.10" fill="none" stroke="#222" stroke-width="0.9"/><rect x="407.30" y="101.00" width="145.90" height="244.90" fill="none" stroke="#111" stroke-width="1.4"/><rect x="409.40" y="102.60" width="141.80" height="29.80" fill="none" stroke="#333" stroke-width="0.4"/><path d="M398.00 92.10L407.30 101.00" stroke="#000" stroke-width="0.45" /><path d="M562.70 92.10L553.20 101.00" stroke="#000" stroke-width="0.45" /><path d="M398.00 354.40L407.30 345.90" stroke="#000" stroke-width="0.45" /><path d="M562.70 354.40L553.20 345.90" stroke="#000" stroke-width="0.45" /><path d="M407.30 133.00L553.20 133.00" stroke="#000" stroke-width="0.9" /><path d="M407.30 135.40L553.20 135.40" stroke="#444" stroke-width="0.4" /><path d="M407.30 137.70L553.20 137.70" stroke="#000" stroke-width="0.9" /><path d="M407.30 139.80L553.20 139.80" stroke="#333" stroke-width="0.45" /><path d="M409.50 139.80L409.50 344.80" stroke="#222" stroke-width="0.45" /><path d="M428.20 137.70L428.20 345.90" stroke="#000" stroke-width="1.0" /><path d="M431.30 137.70L431.30 345.90" stroke="#444" stroke-width="0.4" /><path d="M433.60 139.80L433.60 345.90" stroke="#444" stroke-width="0.4" /><path d="M435.20 139.80L435.20 344.80" stroke="#000" stroke-width="0.7" /><path d="M435.20 344.80L551.00 344.80" stroke="#333" stroke-width="0.5" /><path d="M551.00 139.80L551.00 344.80" stroke="#222" stroke-width="0.5" /><rect x="543.50" y="195.80" width="2.70" height="65.40" fill="#a0a0a0" stroke="#555" stroke-width="0.5"/><path d="M546.00 228.70L557.00 239.80" stroke="#000" stroke-width="0.5" /><path d="M557.40 240.20L562.80 240.20" stroke="#000" stroke-width="1.1" /><path d="M409.6 132.4Q410.2 115.9 413.4 115.9Q419.4 116.9 424.4 132.4" fill="none" stroke="#111" stroke-width="0.85"/><path d="M418.8 110.6C422.6 109.8 425.4 106.7 425.6 102.8C421.8 103.6 419.0 106.7 418.8 110.6z" fill="none" stroke="#111" stroke-width="0.85"/><path d="M424.3 116.0C433.5 117.1 441.0 111.8 443.1 102.8C433.9 101.7 426.4 107.0 424.3 116.0z" fill="none" stroke="#111" stroke-width="0.85"/><path d="M438.0 132.3C446.0 128.8 449.6 120.9 447.0 112.6C439.0 116.1 435.4 124.0 438.0 132.3z" fill="none" stroke="#111" stroke-width="0.85"/><path d="M445.9 132.4Q446.5 126.4 449.8 126.4Q453.1 127.4 455.8 132.4" fill="none" stroke="#111" stroke-width="0.85"/><path d="M454.7 110.4C450.5 119.2 453.7 127.6 462.5 131.6C466.7 122.8 463.5 114.4 454.7 110.4z" fill="none" stroke="#111" stroke-width="0.85"/><path d="M458.6 102.8Q459 111 468 117.4" fill="none" stroke="#111" stroke-width=".85"/><path d="M469 118Q476.500 113 478 102.800" fill="none" stroke="#111" stroke-width=".85"/><ellipse cx="473.500" cy="124.200" rx="2" ry="4.600" transform="rotate(-12 473.500 124.200)" fill="none" stroke="#111" stroke-width=".85"/><path d="M478.1 132.4Q478.7 118.1 482.0 118.1Q485.3 119.1 488.0 132.4" fill="none" stroke="#111" stroke-width="0.85"/><path d="M485.3 110.4C484.2 116.5 487.5 121.6 493.6 123.0C494.7 116.9 491.4 111.8 485.3 110.4z" fill="none" stroke="#111" stroke-width="0.85"/><path d="M482 102.800L483.200 106.600L485.800 102.800" fill="none" stroke="#111" stroke-width=".5"/><path d="M491.4 102.8C489.7 111.3 494.4 117.0 503.0 117.0C504.7 108.5 500.0 102.8 491.4 102.8z" fill="none" stroke="#111" stroke-width="0.85"/><path d="M497.4 132.4Q498.2 124.7 502.6 124.7Q503.8 125.7 504.8 132.4" fill="none" stroke="#111" stroke-width="0.85"/><path d="M511.8 106.5C506.9 110.3 505.6 116.5 508.5 122.0C513.4 118.2 514.7 112.0 511.8 106.5z" fill="none" stroke="#111" stroke-width="0.85"/><path d="M516.8 132.4Q517.5 117.0 521.8 117.0Q527.5 118.0 532.2 132.4" fill="none" stroke="#111" stroke-width="0.85"/><path d="M517.400 102.800L518.400 105.200L519.600 102.800" fill="none" stroke="#111" stroke-width=".5"/><path d="M526.7 111.0C531.3 110.6 534.6 107.3 535.0 102.8C530.4 103.2 527.1 106.5 526.7 111.0z" fill="none" stroke="#111" stroke-width="0.85"/><path d="M532.2 117.0C541.0 118.1 548.1 113.0 550.0 104.3C541.2 103.2 534.1 108.3 532.2 117.0z" fill="none" stroke="#111" stroke-width="0.85"/><path d="M551 116C545 119 542.500 126 546.500 132.300" fill="none" stroke="#111" stroke-width=".85"/><path d="M419.4 140.4C418.4 147.2 421.0 154.8 426.0 159.5C427.0 152.7 424.4 145.1 419.4 140.4z" fill="none" stroke="#111" stroke-width="0.85"/><path d="M411.0 141.0C409.8 146.8 411.6 153.6 415.5 158.0C416.7 152.2 414.9 145.4 411.0 141.0z" fill="none" stroke="#111" stroke-width="0.85"/><path d="M416.5 166.0C413.3 177.1 416.3 190.3 424.0 199.0C427.2 187.9 424.2 174.7 416.5 166.0z" fill="none" stroke="#111" stroke-width="0.85"/><path d="M410.2 171.0C408.9 176.3 409.7 183.1 412.2 188.0C413.5 182.7 412.7 175.9 410.2 171.0z" fill="none" stroke="#111" stroke-width="0.85"/><path d="M410.7 193.7C409.3 202.3 412.6 212.2 418.8 218.3C420.2 209.7 416.9 199.8 410.7 193.7z" fill="none" stroke="#111" stroke-width="0.85"/><path d="M420.6 214.0C419.2 221.2 421.8 229.4 427.0 234.5C428.4 227.3 425.8 219.1 420.6 214.0z" fill="none" stroke="#111" stroke-width="0.85"/><path d="M410.2 222.0C409.0 228.2 410.5 235.8 414.0 241.0C415.2 234.8 413.7 227.2 410.2 222.0z" fill="none" stroke="#111" stroke-width="0.85"/><path d="M417.0 247.0C413.1 259.6 416.5 274.4 425.5 284.0C429.4 271.4 426.0 256.6 417.0 247.0z" fill="none" stroke="#111" stroke-width="0.85"/><path d="M410.4 252.0C409.2 258.3 410.2 266.3 413.0 272.0C414.2 265.7 413.2 257.7 410.4 252.0z" fill="none" stroke="#111" stroke-width="0.85"/><path d="M411.0 282.0C410.1 288.3 413.3 294.3 419.0 297.0C419.9 290.7 416.7 284.7 411.0 282.0z" fill="none" stroke="#111" stroke-width="0.85"/><path d="M421.0 288.0C419.7 294.4 422.0 301.6 426.8 306.0C428.1 299.6 425.8 292.4 421.0 288.0z" fill="none" stroke="#111" stroke-width="0.85"/><path d="M412.5 298.0C410.1 306.8 412.1 317.6 417.5 325.0C419.9 316.2 417.9 305.4 412.5 298.0z" fill="none" stroke="#111" stroke-width="0.85"/><path d="M420.0 310.0C418.6 317.3 421.2 325.7 426.5 331.0C427.9 323.7 425.3 315.3 420.0 310.0z" fill="none" stroke="#111" stroke-width="0.85"/><path d="M410.4 326.0C409.3 331.7 410.9 338.5 414.5 343.0C415.6 337.3 414.0 330.5 410.4 326.0z" fill="none" stroke="#111" stroke-width="0.85"/><path d="M418.0 333.0C417.2 337.8 419.6 342.4 424.0 344.5C424.8 339.7 422.4 335.1 418.0 333.0z" fill="none" stroke="#111" stroke-width="0.85"/><path d="M421.5 160.0C420.7 165.5 422.7 171.9 426.5 176.0C427.3 170.5 425.3 164.1 421.5 160.0z" fill="none" stroke="#111" stroke-width="0.85"/><path d="M410.5 150.0C409.7 155.0 410.7 161.4 413.0 166.0C413.8 161.0 412.8 154.6 410.5 150.0z" fill="none" stroke="#111" stroke-width="0.85"/><path d="M422.0 238.0C421.1 244.0 423.0 251.2 426.8 256.0C427.7 250.0 425.8 242.8 422.0 238.0z" fill="none" stroke="#111" stroke-width="0.85"/><path d="M410.3 270.0C409.4 274.5 410.3 280.1 412.6 284.0C413.5 279.5 412.6 273.9 410.3 270.0z" fill="none" stroke="#111" stroke-width="0.85"/><path d="M422.5 262.0C421.8 268.5 423.6 276.5 427.0 282.0C427.7 275.5 425.9 267.5 422.5 262.0z" fill="none" stroke="#111" stroke-width="0.85"/><path d="M410.4 300.0C409.5 305.6 410.3 312.8 412.4 318.0C413.3 312.4 412.5 305.2 410.4 300.0z" fill="none" stroke="#111" stroke-width="0.85"/><path d="M407.3 320v25.900h22" fill="none" stroke="#111" stroke-width="1.500"/><path d="M411.500 342.200h15v3h-15z" fill="#111"/><path d="M553.2 329v16.900" fill="none" stroke="#111" stroke-width="1.600"/><text transform="translate(427.40 340.00) rotate(-90) scale(1 1)" stroke="#000" stroke-width=".25" font-size="2.8" fill="#000" text-anchor="start" font-weight="bold">L30X27</text><text transform="translate(395.60 345.30) rotate(-90) scale(1 1)" stroke="#000" stroke-width=".25" font-size="2.8" fill="#000" text-anchor="start" font-weight="bold">T240X40X8</text><text transform="translate(399.90 341.50) rotate(-90) scale(1 1)" stroke="#000" stroke-width=".25" font-size="2.8" fill="#000" text-anchor="start" font-weight="bold">T240X40X8</text><text transform="translate(551.00 341.00) rotate(-90) scale(1 1)" stroke="#000" stroke-width=".25" font-size="2.8" fill="#000" text-anchor="start" font-weight="bold">T240X40</text><text transform="translate(555.20 345.00) rotate(-90) scale(1 1)" stroke="#000" stroke-width=".25" font-size="2.8" fill="#000" text-anchor="start" font-weight="bold">T240X40</text><text transform="translate(407.00 89.60) rotate(0) scale(1.3 1)" stroke="#000" stroke-width=".25" font-size="2.2" fill="#000" text-anchor="start" font-weight="bold">T240X40X8</text><text transform="translate(411.60 94.00) rotate(0) scale(1.3 1)" stroke="#000" stroke-width=".25" font-size="2.2" fill="#000" text-anchor="start" font-weight="bold">T240X40X8</text><text transform="translate(411.60 131.20) rotate(0) scale(1.3 1)" stroke="#000" stroke-width=".25" font-size="2.2" fill="#000" text-anchor="start" font-weight="bold">T240X40X8</text><path d="M381.80 91.80L381.80 354.60" stroke="#1c1ce0" stroke-width="0.8" /><path d="M380.9 94.4l1-2.8 1 2.8zM380.9 351.6l1 2.8 1-2.8z" fill="#1c1ce0"/><text transform="translate(381.20 225.00) rotate(-90) scale(1 1)" font-size="3" fill="#1c1ce0" text-anchor="start" font-weight="bold">2620</text><path d="M395.30 163.60L562.70 163.60" stroke="#2418b4" stroke-width="1.2" /><rect x="398.00" y="163.60" width="4.10" height="3.80" fill="none" stroke="#1c1ce0" stroke-width="0.6"/><rect x="402.10" y="163.60" width="4.10" height="3.80" fill="none" stroke="#1c1ce0" stroke-width="0.6"/><rect x="428.60" y="163.60" width="4.10" height="3.80" fill="none" stroke="#1c1ce0" stroke-width="0.6"/><rect x="552.40" y="163.60" width="4.10" height="3.80" fill="none" stroke="#1c1ce0" stroke-width="0.6"/><rect x="557.60" y="163.60" width="4.10" height="3.80" fill="none" stroke="#1c1ce0" stroke-width="0.6"/><rect x="428.60" y="163.60" width="5.00" height="3.80" fill="none" stroke="#1c1ce0" stroke-width="0.6"/><text transform="translate(390.30 164.90) rotate(0) scale(0.95 1)" font-size="6.4" fill="#1c1ce0" text-anchor="start" font-weight="bold">A</text><text transform="translate(565.20 165.00) rotate(0) scale(0.95 1)" font-size="6.4" fill="#1c1ce0" text-anchor="start" font-weight="bold">A</text><path d="M396.00 158.50L396.00 163.00" stroke="#8890c0" stroke-width="0.5" /><path d="M564.30 158.00L564.30 163.00" stroke="#223" stroke-width="0.5" /><path d="M469.30 88.80L469.30 354.60" stroke="#2418b4" stroke-width="1.4" /><rect x="465.30" y="92.00" width="3.70" height="4.20" fill="none" stroke="#1c1ce0" stroke-width="0.7"/><rect x="465.30" y="96.20" width="3.70" height="4.20" fill="none" stroke="#1c1ce0" stroke-width="0.7"/><rect x="465.30" y="131.80" width="3.70" height="5.80" fill="none" stroke="#1c1ce0" stroke-width="0.7"/><rect x="465.30" y="345.30" width="3.70" height="4.60" fill="none" stroke="#1c1ce0" stroke-width="0.7"/><rect x="465.30" y="349.90" width="3.70" height="4.60" fill="none" stroke="#1c1ce0" stroke-width="0.7"/><text transform="translate(471.50 88.90) rotate(-90) scale(0.75 1)" font-size="7.6" fill="#1c1ce0" text-anchor="start" font-weight="bold">B</text><text transform="translate(471.50 361.70) rotate(-90) scale(0.75 1)" font-size="7.6" fill="#1c1ce0" text-anchor="start" font-weight="bold">B</text><path d="M471.60 89.70L475.00 89.70" stroke="#8a9a70" stroke-width="0.5" /><path d="M471.00 356.60L475.00 356.60" stroke="#667" stroke-width="0.5" /><path d="M413.30 96.40L413.30 137.60" stroke="#1c1ce0" stroke-width="0.7" /><path d="M418.00 96.40L418.00 345.00" stroke="#7070f0" stroke-width="0.8" /><circle cx="417.6" cy="116" r=".7" fill="#1c1ce0"/><circle cx="413.4" cy="107" r=".6" fill="#1c1ce0"/><text transform="translate(418.40 222.60) rotate(-90) scale(1 1)" font-size="2.4" fill="#1c1ce0" text-anchor="start" font-weight="bold">90</text><text transform="translate(418.40 241.00) rotate(-90) scale(1 1)" font-size="2.4" fill="#1c1ce0" text-anchor="start" font-weight="bold">90</text><path d="M402.60 335.20L558.00 335.20" stroke="#1c1ce0" stroke-width="0.7" /><path d="M402.60 339.30L558.00 339.30" stroke="#1c1ce0" stroke-width="0.7" /><text transform="translate(415.00 334.40) rotate(0) scale(1 1)" font-size="3" fill="#1c1ce0" text-anchor="start" font-weight="bold">200</text><text transform="translate(491.00 334.40) rotate(0) scale(1 1)" font-size="3" fill="#1c1ce0" text-anchor="start" font-weight="bold">1160</text><text transform="translate(478.50 338.40) rotate(0) scale(1 1)" font-size="3" fill="#1c1ce0" text-anchor="start" font-weight="bold">1400</text><path d="M398.80 371.20L562.60 371.20" stroke="#1c1ce0" stroke-width="0.9" /><text transform="translate(478.00 370.80) rotate(0) scale(1 1)" font-size="3" fill="#1c1ce0" text-anchor="start" font-weight="bold">1500</text><path d="M399.00 354.60L424.40 354.60" stroke="#e8282c" stroke-width="1.1" /><path d="M398.80 352.00L398.80 321.40" stroke="#22cc22" stroke-width="1.1" /><rect x="395.60" y="351.60" width="5.20" height="5.60" fill="#fff" stroke="#000" stroke-width="0.8"/><text transform="translate(423.40 354.40) rotate(0) scale(0.86 1)" font-size="10.4" fill="#e8282c" text-anchor="start" font-weight="bold">X</text><text transform="translate(398.20 329.00) rotate(0) scale(0.82 1)" font-size="11" fill="#22cc22" text-anchor="start" font-weight="bold">Y</text><defs><linearGradient id="gg" x1="0" y1="0" x2="0" y2="1"><stop offset="0" stop-color="#bdbdbd"/><stop offset="1" stop-color="#e9e9e9"/></linearGradient></defs><rect x="311" y="86.8" width="22.6" height="5.4" fill="url(#gg)" stroke="#aaa" stroke-width=".3"/><rect x="311" y="165.6" width="22.6" height="5" fill="url(#gg)" stroke="#aaa" stroke-width=".3"/><path d="M332.50 100.00L332.50 160.00" stroke="#666" stroke-width="1.6" /><path d="M333.60 100.00L333.60 160.00" stroke="#333" stroke-width="0.4" /><rect x="329.40" y="92.40" width="4.00" height="3.80" fill="#fff" stroke="#1c1ce0" stroke-width="0.55"/><rect x="329.40" y="96.40" width="4.00" height="3.80" fill="#fff" stroke="#1c1ce0" stroke-width="0.55"/><rect x="329.40" y="125.80" width="4.00" height="3.80" fill="#fff" stroke="#1c1ce0" stroke-width="0.55"/><rect x="329.40" y="129.40" width="4.00" height="3.80" fill="#fff" stroke="#1c1ce0" stroke-width="0.55"/><rect x="329.40" y="156.60" width="4.00" height="3.80" fill="#fff" stroke="#1c1ce0" stroke-width="0.55"/><rect x="329.40" y="160.60" width="4.00" height="3.80" fill="#fff" stroke="#1c1ce0" stroke-width="0.55"/><text transform="translate(328.20 130.00) rotate(-90) scale(1 1)" font-size="3" fill="#1c1ce0" text-anchor="start" font-weight="bold">E</text><text transform="translate(303.10 140.00) rotate(-90) scale(0.98 1)" stroke="#1c1ce0" stroke-width=".3" font-size="8.4" fill="#1c1ce0" text-anchor="start">Coupe B-B</text><path d="M306.80 91.80L306.80 166.00" stroke="#1c1ce0" stroke-width="0.5" /><path d="M308.80 91.80L308.80 166.00" stroke="#1c1ce0" stroke-width="0.4" /><text transform="translate(305.90 100.40) rotate(-90) scale(1 1)" font-size="3.3" fill="#1c1ce0" text-anchor="start" font-weight="bold">490</text><text transform="translate(305.90 126.00) rotate(-90) scale(1 1)" font-size="3.3" fill="#1c1ce0" text-anchor="start" font-weight="bold">40</text><text transform="translate(305.90 133.00) rotate(-90) scale(1 1)" font-size="3.3" fill="#1c1ce0" text-anchor="start" font-weight="bold">40</text><text transform="translate(305.90 150.00) rotate(-90) scale(1 1)" font-size="3.3" fill="#1c1ce0" text-anchor="start" font-weight="bold">1350</text><text transform="translate(305.90 165.60) rotate(-90) scale(1 1)" font-size="3.3" fill="#1c1ce0" text-anchor="start" font-weight="bold">490</text><path d="M333.60 97.00L338.40 98.89" stroke="#000" stroke-width="0.5" /><path d="M338.40 98.89L338.40 97.69" stroke="#000" stroke-width="0.4" /><text transform="translate(339.50 97.89) rotate(-90) scale(1.3610021786492383 1)" stroke="#000" stroke-width=".25" font-size="3.4" fill="#000" text-anchor="start" font-weight="bold">T240X40X8</text><path d="M333.60 97.80L345.20 95.90" stroke="#000" stroke-width="0.5" /><path d="M345.20 95.90L345.20 94.70" stroke="#000" stroke-width="0.4" /><text transform="translate(346.30 94.90) rotate(-90) scale(1.1980392156862751 1)" stroke="#000" stroke-width=".25" font-size="3.4" fill="#000" text-anchor="start" font-weight="bold">T240X40X8</text><path d="M333.60 101.00L351.80 92.99" stroke="#000" stroke-width="0.5" /><path d="M351.80 92.99L351.80 91.79" stroke="#000" stroke-width="0.4" /><text transform="translate(352.90 91.99) rotate(-90) scale(1.0 1)" stroke="#000" stroke-width=".25" font-size="3.081111111111111" fill="#000" text-anchor="start" font-weight="bold">L30X27</text><path d="M333.60 101.00L358.30 90.13" stroke="#000" stroke-width="0.5" /><path d="M358.30 90.13L358.30 88.93" stroke="#000" stroke-width="0.4" /><text transform="translate(359.40 89.13) rotate(-90) scale(1.0 1)" stroke="#000" stroke-width=".25" font-size="3.0922222222222238" fill="#000" text-anchor="start" font-weight="bold">L30X27</text><path d="M333.60 101.00L365.30 87.05" stroke="#000" stroke-width="0.5" /><path d="M365.30 87.05L365.30 85.85" stroke="#000" stroke-width="0.4" /><text transform="translate(366.40 86.05) rotate(-90) scale(1.0 1)" stroke="#000" stroke-width=".25" font-size="2.8477777777777806" fill="#000" text-anchor="start" font-weight="bold">L30X27</text><path d="M333.60 101.00L372.10 84.06" stroke="#000" stroke-width="1.1" /><path d="M372.10 84.06L372.10 82.86" stroke="#000" stroke-width="0.4" /><text transform="translate(373.20 83.06) rotate(-90) scale(1.0 1)" stroke="#000" stroke-width=".25" font-size="3.0166666666666666" fill="#000" text-anchor="start" font-weight="bold">L30X27</text><path d="M333.60 124.40L336.80 126.99" stroke="#000" stroke-width="0.5" /><path d="M336.80 126.99L336.80 125.79" stroke="#000" stroke-width="0.4" /><text transform="translate(337.90 125.99) rotate(-90) scale(1.22483660130719 1)" stroke="#000" stroke-width=".25" font-size="3.4" fill="#000" text-anchor="start" font-weight="bold">L30X27</text><path d="M333.60 125.20L344.60 123.56" stroke="#000" stroke-width="0.5" /><path d="M344.60 123.56L344.60 122.36" stroke="#000" stroke-width="0.4" /><text transform="translate(345.70 122.56) rotate(-90) scale(1.156862745098039 1)" stroke="#000" stroke-width=".25" font-size="3.4" fill="#000" text-anchor="start" font-weight="bold">L30X27</text><path d="M333.60 128.40L352.30 120.17" stroke="#000" stroke-width="0.5" /><path d="M352.30 120.17L352.30 118.97" stroke="#000" stroke-width="0.4" /><text transform="translate(353.40 119.17) rotate(-90) scale(1.0115468409586066 1)" stroke="#000" stroke-width=".25" font-size="3.4" fill="#000" text-anchor="start" font-weight="bold">T240X40X8</text><path d="M333.60 128.40L358.50 117.44" stroke="#000" stroke-width="0.5" /><path d="M358.50 117.44L358.50 116.24" stroke="#000" stroke-width="0.4" /><text transform="translate(359.60 116.44) rotate(-90) scale(1.0 1)" stroke="#000" stroke-width=".25" font-size="2.734444444444451" fill="#000" text-anchor="start" font-weight="bold">L30X27</text><path d="M333.60 128.40L365.40 114.41" stroke="#000" stroke-width="1.1" /><path d="M365.40 114.41L365.40 113.21" stroke="#000" stroke-width="0.4" /><text transform="translate(366.50 113.41) rotate(-90) scale(1.0 1)" stroke="#000" stroke-width=".25" font-size="2.7244444444444547" fill="#000" text-anchor="start" font-weight="bold">L30X27</text><path d="M333.60 156.80L336.80 159.20" stroke="#000" stroke-width="0.5" /><path d="M336.80 159.20L336.80 158.00" stroke="#000" stroke-width="0.4" /><text transform="translate(337.90 158.20) rotate(-90) scale(1.3725490196078443 1)" stroke="#000" stroke-width=".25" font-size="3.4" fill="#000" text-anchor="start" font-weight="bold">L30X27</text><path d="M333.60 157.60L344.60 155.30" stroke="#000" stroke-width="0.5" /><path d="M344.60 155.30L344.60 154.10" stroke="#000" stroke-width="0.4" /><text transform="translate(345.70 154.30) rotate(-90) scale(1.4624183006535953 1)" stroke="#000" stroke-width=".25" font-size="3.4" fill="#000" text-anchor="start" font-weight="bold">L30X27</text><path d="M333.60 160.80L352.30 151.45" stroke="#000" stroke-width="0.5" /><path d="M352.30 151.45L352.30 150.25" stroke="#000" stroke-width="0.4" /><text transform="translate(353.40 150.45) rotate(-90) scale(1.4093137254901986 1)" stroke="#000" stroke-width=".25" font-size="3.4" fill="#000" text-anchor="start" font-weight="bold">L30X27</text><path d="M333.60 160.80L358.50 148.35" stroke="#000" stroke-width="0.5" /><path d="M358.50 148.35L358.50 147.15" stroke="#000" stroke-width="0.4" /><text transform="translate(359.60 147.35) rotate(-90) scale(1.384803921568629 1)" stroke="#000" stroke-width=".25" font-size="3.4" fill="#000" text-anchor="start" font-weight="bold">L30X27</text><path d="M333.60 160.80L365.40 144.90" stroke="#000" stroke-width="0.5" /><path d="M365.40 144.90L365.40 143.70" stroke="#000" stroke-width="0.4" /><text transform="translate(366.50 143.90) rotate(-90) scale(1.0511982570806122 1)" stroke="#000" stroke-width=".25" font-size="3.4" fill="#000" text-anchor="start" font-weight="bold">T240X40X8</text><path d="M333.60 160.80L371.60 141.80" stroke="#000" stroke-width="1.1" /><path d="M371.60 141.80L371.60 140.60" stroke="#000" stroke-width="0.4" /><text transform="translate(372.70 140.80) rotate(-90) scale(1.0 1)" stroke="#000" stroke-width=".25" font-size="3.0000000000000036" fill="#000" text-anchor="start" font-weight="bold">T240X40X8</text><defs><linearGradient id="gh" x1="0" y1="0" x2="1" y2="0"><stop offset="0" stop-color="#bdbdbd"/><stop offset="1" stop-color="#e9e9e9"/></linearGradient></defs><rect x="392" y="415.4" width="6.2" height="21.6" fill="url(#gh)" stroke="#aaa" stroke-width=".3"/><rect x="467.5" y="415.4" width="6.2" height="21.6" fill="url(#gh)" stroke="#aaa" stroke-width=".3"/><path d="M398.20 417.20L467.50 417.20" stroke="#5a5a5a" stroke-width="2.0" /><rect x="398.80" y="415.80" width="3.60" height="4.60" fill="#fff" stroke="#1c1ce0" stroke-width="0.55"/><rect x="402.60" y="415.80" width="3.60" height="4.60" fill="#fff" stroke="#1c1ce0" stroke-width="0.55"/><rect x="429.20" y="415.80" width="3.60" height="4.60" fill="#fff" stroke="#1c1ce0" stroke-width="0.55"/><rect x="432.60" y="415.80" width="3.60" height="4.60" fill="#fff" stroke="#1c1ce0" stroke-width="0.55"/><rect x="458.60" y="415.80" width="3.60" height="4.60" fill="#fff" stroke="#1c1ce0" stroke-width="0.55"/><rect x="462.40" y="415.80" width="3.60" height="4.60" fill="#fff" stroke="#1c1ce0" stroke-width="0.55"/><text transform="translate(428.60 424.00) rotate(0) scale(1 1)" font-size="2.6" fill="#1c1ce0" text-anchor="start" font-weight="bold">40</text><path d="M398.20 437.00L467.50 437.00" stroke="#222" stroke-width="0.7" /><path d="M398.20 439.20L467.50 439.20" stroke="#1c1ce0" stroke-width="0.7" /><path d="M398.20 442.00L467.50 442.00" stroke="#1c1ce0" stroke-width="0.6" /><path d="M398.40 437.00L398.40 443.00" stroke="#1c1ce0" stroke-width="0.6" /><path d="M406.00 437.00L406.00 443.00" stroke="#1c1ce0" stroke-width="0.6" /><path d="M429.00 437.00L429.00 443.00" stroke="#1c1ce0" stroke-width="0.6" /><path d="M433.00 437.00L433.00 443.00" stroke="#1c1ce0" stroke-width="0.6" /><path d="M458.60 437.00L458.60 443.00" stroke="#1c1ce0" stroke-width="0.6" /><path d="M467.40 437.00L467.40 443.00" stroke="#1c1ce0" stroke-width="0.6" /><text transform="translate(398.80 438.80) rotate(0) scale(1 1)" font-size="3.3" fill="#1c1ce0" text-anchor="start" font-weight="bold">200</text><text transform="translate(412.60 438.80) rotate(0) scale(1 1)" font-size="3.3" fill="#1c1ce0" text-anchor="start" font-weight="bold">560</text><text transform="translate(428.40 438.80) rotate(0) scale(1 1)" font-size="3.3" fill="#1c1ce0" text-anchor="start" font-weight="bold">40</text><text transform="translate(441.40 438.80) rotate(0) scale(1 1)" font-size="3.3" fill="#1c1ce0" text-anchor="start" font-weight="bold">560</text><text transform="translate(459.40 438.80) rotate(0) scale(1 1)" font-size="3.3" fill="#1c1ce0" text-anchor="start" font-weight="bold">200</text><text transform="translate(406.90 451.40) rotate(0) scale(0.98 1)" stroke="#1c1ce0" stroke-width=".3" font-size="8.4" fill="#1c1ce0" text-anchor="start">Coupe A-A</text><text transform="translate(379.00 378.30) rotate(0) scale(1.057925771765521 1)" stroke="#000" stroke-width=".25" font-size="3.1" fill="#000" text-anchor="start" font-weight="bold">L30X27</text><path d="M391.80 378.40L406.62 416.20" stroke="#000" stroke-width="1.0" /><text transform="translate(383.00 385.40) rotate(0) scale(0.8411377037807829 1)" stroke="#000" stroke-width=".25" font-size="3.1" fill="#000" text-anchor="start" font-weight="bold">L30X27</text><path d="M393.30 385.50L405.34 416.20" stroke="#000" stroke-width="0.5" /><text transform="translate(384.20 392.10) rotate(0) scale(1.005896635449187 1)" stroke="#000" stroke-width=".25" font-size="3.1" fill="#000" text-anchor="start" font-weight="bold">L30X27</text><path d="M396.40 392.20L405.81 416.20" stroke="#000" stroke-width="0.5" /><text transform="translate(386.00 398.50) rotate(0) scale(0.9798820672910172 1)" stroke="#000" stroke-width=".25" font-size="3.1" fill="#000" text-anchor="start" font-weight="bold">L30X27</text><path d="M397.90 398.60L404.80 416.20" stroke="#000" stroke-width="0.5" /><text transform="translate(379.60 405.20) rotate(0) scale(1.1099549080818585 1)" stroke="#000" stroke-width=".25" font-size="3.1" fill="#000" text-anchor="start" font-weight="bold">T240X40X8</text><path d="M399.40 405.30L403.67 416.20" stroke="#000" stroke-width="0.5" /><text transform="translate(379.00 411.90) rotate(0) scale(1.2371372412995707 1)" stroke="#000" stroke-width=".25" font-size="3.1" fill="#000" text-anchor="start" font-weight="bold">T240X40X8</text><path d="M401.00 412.00L402.65 416.20" stroke="#000" stroke-width="0.5" /><text transform="translate(406.50 385.40) rotate(0) scale(1.057925771765521 1)" stroke="#000" stroke-width=".25" font-size="3.1" fill="#000" text-anchor="start" font-weight="bold">L30X27</text><path d="M419.30 385.50L431.34 416.20" stroke="#000" stroke-width="1.0" /><text transform="translate(408.00 392.10) rotate(0) scale(1.057925771765521 1)" stroke="#000" stroke-width=".25" font-size="3.1" fill="#000" text-anchor="start" font-weight="bold">L30X27</text><path d="M420.80 392.20L430.21 416.20" stroke="#000" stroke-width="0.5" /><text transform="translate(403.40 398.50) rotate(0) scale(1.0579257717655226 1)" stroke="#000" stroke-width=".25" font-size="3.1" fill="#000" text-anchor="start" font-weight="bold">T240X40X8</text><path d="M422.30 398.60L429.20 416.20" stroke="#000" stroke-width="0.5" /><text transform="translate(410.40 405.20) rotate(0) scale(1.1186264308012517 1)" stroke="#000" stroke-width=".25" font-size="3.1" fill="#000" text-anchor="start" font-weight="bold">L30X27</text><path d="M423.90 405.30L428.17 416.20" stroke="#000" stroke-width="0.5" /><text transform="translate(412.60 411.90) rotate(0) scale(1.057925771765521 1)" stroke="#000" stroke-width=".25" font-size="3.1" fill="#000" text-anchor="start" font-weight="bold">L30X27</text><path d="M425.40 412.00L427.05 416.20" stroke="#000" stroke-width="0.5" /><text transform="translate(427.80 378.30) rotate(0) scale(1.0637067869117802 1)" stroke="#000" stroke-width=".25" font-size="3.1" fill="#000" text-anchor="start" font-weight="bold">T240X40X8</text><path d="M446.80 378.40L461.62 416.20" stroke="#000" stroke-width="1.0" /><text transform="translate(427.80 385.40) rotate(0) scale(1.1099549080818585 1)" stroke="#000" stroke-width=".25" font-size="3.1" fill="#000" text-anchor="start" font-weight="bold">T240X40X8</text><path d="M447.60 385.50L459.64 416.20" stroke="#000" stroke-width="0.5" /><text transform="translate(437.00 392.10) rotate(0) scale(1.057925771765521 1)" stroke="#000" stroke-width=".25" font-size="3.1" fill="#000" text-anchor="start" font-weight="bold">L30X27</text><path d="M449.80 392.20L459.21 416.20" stroke="#000" stroke-width="0.5" /><text transform="translate(438.00 398.50) rotate(0) scale(1.1012833853624686 1)" stroke="#000" stroke-width=".25" font-size="3.1" fill="#000" text-anchor="start" font-weight="bold">L30X27</text><path d="M451.30 398.60L458.20 416.20" stroke="#000" stroke-width="0.5" /><text transform="translate(439.40 405.20) rotate(0) scale(1.1186264308012517 1)" stroke="#000" stroke-width=".25" font-size="3.1" fill="#000" text-anchor="start" font-weight="bold">L30X27</text><path d="M452.90 405.30L457.17 416.20" stroke="#000" stroke-width="0.5" /><text transform="translate(441.00 411.90) rotate(0) scale(1.1099549080818603 1)" stroke="#000" stroke-width=".25" font-size="3.1" fill="#000" text-anchor="start" font-weight="bold">L30X27</text><path d="M454.40 412.00L456.05 416.20" stroke="#000" stroke-width="0.5" /><path d="M617.00 426.30L646.40 426.30" stroke="#e03030" stroke-width="0.8" /><path d="M631.70 411.60L631.70 440.60" stroke="#30c030" stroke-width="0.8" /><rect x="629.40" y="424.00" width="4.60" height="4.60" fill="#fff" stroke="#000" stroke-width="0.6"/></svg>
<svg class="a" style="left:0;top:0" width="688" height="60" viewBox="0 0 688 60"><path d="M2.4 27V40" stroke="#b5b5b5" stroke-width=".8" stroke-dasharray=".7 1"/><g transform="translate(8 28.6)"><path d="M.6 .8h6.6l3 3v6H.6z" fill="#fff" stroke="#5d6b75" stroke-width=".9"/><path d="M7.2 .8v3h3" fill="none" stroke="#5d6b75" stroke-width=".7"/></g><g transform="translate(24 29.4)"><path d="M.4 1.4h3.8l1 1.2h5v1.6H2.4L.4 8.6z" fill="#2c6f87"/><path d="M2.8 4.8h9.4L9.6 9H.6z" fill="#2c7f9a"/></g><g transform="translate(42 28.8)"><path d="M.4 .4h8l2 2v8H.4z" fill="#3d4d5c"/><rect x="2.4" y=".4" width="5.2" height="3.4" fill="#e9eef2"/><rect x="5.6" y=".9" width="1.3" height="2.3" fill="#3d4d5c"/><rect x="2" y="5.8" width="6.6" height="3.6" fill="#b9c4cc"/><path d="M2.8 7h5M2.8 8.3h5" stroke="#3d4d5c" stroke-width=".5"/></g><path d="M57 27V40" stroke="#dcdcdc" stroke-width=".7"/><g transform="translate(63 28.4)"><rect x="2.6" y=".5" width="5.8" height="3.4" fill="#fff" stroke="#3d4a56" stroke-width=".9"/><rect x=".3" y="3.6" width="10.6" height="5" rx="1" fill="#3d4a56"/><rect x="2.4" y="6.6" width="6.4" height="4" fill="#fff" stroke="#3d4a56" stroke-width=".9"/><path d="M3.4 8.2h4.4M3.4 9.4h4.4" stroke="#3d4a56" stroke-width=".4"/></g><g transform="translate(80 29)"><path d="M.6 .6h7l3 2.8v6H.6z" fill="#eaf3f8" stroke="#8fb3c6" stroke-width=".8"/><circle cx="5.6" cy="5.4" r="2.1" fill="#fff" stroke="#6d9db5" stroke-width=".8"/><path d="M7.2 7l1.8 1.8" stroke="#6d9db5" stroke-width=".9"/></g><path d="M96 27V40" stroke="#dcdcdc" stroke-width=".7"/><g transform="translate(102 28)"><path d="M4.6 3.6l4.2 1.8v4.2L4.6 11.6.6 9.6V5.4z" fill="#fff" stroke="#3d4a56" stroke-width=".8"/><path d="M.6 5.4l4 2 4.2-2M4.6 7.4v4.2" fill="none" stroke="#3d4a56" stroke-width=".7"/><path d="M4.6 .2l2.4 1.5-2.4 1.5-2.4-1.5z" fill="#2b7a94"/><path d="M4.6 3v3" stroke="#2b7a94" stroke-width="1.1"/></g><g transform="translate(117 28.2)"><circle cx="4.2" cy="7.2" r="3.4" fill="#fff" stroke="#5d6b75" stroke-width=".8"/><circle cx="4.2" cy="7.2" r="1.5" fill="none" stroke="#5d6b75" stroke-width=".7"/><circle cx="8" cy="3.4" r="2.5" fill="#2c6f87"/><circle cx="8" cy="3.4" r="3" fill="none" stroke="#2c6f87" stroke-width="1.3" stroke-dasharray="1.1 1.25"/><circle cx="8" cy="3.4" r=".9" fill="#fff"/></g><path d="M133 27V40" stroke="#dcdcdc" stroke-width=".7"/><g transform="translate(139 28.4)"><path d="M2.2 .4L7.6 8M8.8 .4L3.4 8" stroke="#111" stroke-width="1.3" fill="none"/><circle cx="2.4" cy="9" r="1.5" fill="#fff" stroke="#111" stroke-width="1"/><circle cx="8.6" cy="9" r="1.5" fill="#fff" stroke="#111" stroke-width="1"/></g><g transform="translate(156 28.4)"><path d="M.5 .5h4.4l2 2v5.2H.5z" fill="#fff" stroke="#5d6b75" stroke-width=".8"/><path d="M4.6 3.8h4l2 2v5H4.6z" fill="#fff" stroke="#5d6b75" stroke-width=".8"/></g><g transform="translate(172.4 28.6)"><rect x=".5" y="1.2" width="6" height="6.6" rx=".6" fill="#fff" stroke="#3d4a56" stroke-width=".9"/><rect x="2" y=".2" width="3" height="1.8" fill="#3d4a56"/><rect x="1.6" y="3" width="3.8" height="3.4" fill="#cfd6db"/><path d="M5.6 5.6h3.2l1.6 1.6v3.6H5.6z" fill="#fff" stroke="#7d8790" stroke-width=".8"/></g><path d="M188 27V40" stroke="#dcdcdc" stroke-width=".7"/><g transform="translate(193 28.6)"><path d="M5.6 .2L.3 4.6l5.3 4V6c3.2-.2 5 1.400 6 4.8.6-4.600-1.700-8-6-8z" fill="#1f6a9c"/></g><g transform="translate(211 28.6)"><path d="M6.600 .2l5.300 4.400-5.300 4V6C3.400 5.800 1.600 7.400.6 10.800 0 6.200 2.300 2.800 6.600 2.800z" fill="#9a9a9a"/></g><g transform="translate(227.6 28.6)"><path d="M1.400 5.200a4.700 4.700 0 0 1 8-3.200" fill="none" stroke="#2c6f87" stroke-width="2.200"/><path d="M11.400 .4v4.400H7z" fill="#2c6f87"/><path d="M10.600 5.800a4.700 4.700 0 0 1-8 3.200" fill="none" stroke="#2c6f87" stroke-width="2.200"/><path d="M.6 10.600V6.200H5z" fill="#2c6f87"/></g><path d="M245 27V40" stroke="#dcdcdc" stroke-width=".7"/><g transform="translate(250 28.4)"><rect x=".4" y=".4" width="7.600" height="10.400" fill="#b9c1c7" stroke="#6d7880" stroke-width=".6"/><rect x="1.400" y="1.400" width="5.600" height="4.600" fill="#2b7a94"/><path d="M1.600 7.600h2.200v2.200H1.600zM4.800 7.600H7v2.200H4.800z" fill="#6d7880"/></g><g transform="translate(266.4 28.4)"><rect x=".4" y=".8" width="8.400" height="10" fill="#b9c1c7" stroke="#6d7880" stroke-width=".6"/><rect x="1.200" y="1.600" width="4" height="4.600" fill="#2b7a94"/><path d="M1.600 8h2.400v2H1.600z" fill="#6d7880"/><path d="M5 8h2.800v2H5z" fill="#fff"/><path d="M6 6.600L9.800.8l1 .8L7.400 7.400z" fill="#f0b428"/><path d="M8.600 0l2.400 2" stroke="#d04040" stroke-width=".8"/></g><path d="M281.6 27V40" stroke="#b5b5b5" stroke-width=".8" stroke-dasharray=".7 1"/><g transform="translate(288 29)"><path d="M2.600 3.400h6.200l2.200 2.400v3.400H2.600z" fill="#fff" stroke="#5d6b75" stroke-width=".8"/><path d="M.2 2.400h3.200M1.800.8v3.200" stroke="#2b7a94" stroke-width=".9"/><path d="M5 7h3.400" stroke="#9aa" stroke-width=".7"/></g><path d="M304.4 27V40" stroke="#b5b5b5" stroke-width=".8" stroke-dasharray=".7 1"/><g transform="translate(309.6 28.2)"><path d="M.5 3.200L2.800.6h9l-2.300 2.600z" fill="#2b7a94" stroke="#3d4a56" stroke-width=".6"/><path d="M.5 3.200h9v7.600h-9zM9.500 3.200L11.800.6v7.600l-2.300 2.600" fill="#fff" stroke="#3d4a56" stroke-width=".9"/><path d="M2.800 3.200v5.400h6.700M2.800 8.600L.5 10.800" fill="none" stroke="#8a949c" stroke-width=".5"/></g><path d="M324.79999999999995 33.2h3.2l-1.6 1.9z" fill="#222"/><g transform="translate(333.6 28.4)"><path d="M3 1.200c2-1.400 5.600-1 6.600 1.200.8 1.800.6 3.600 1.200 4.600l-1 .6v2c-1.200 1-3 1-4 0-.2 1.400-2.400 1.200-2.200-.4C1.600 8.400.8 6 1.400 4c.2-1.200.8-2.200 1.600-2.800z" fill="#fff" stroke="#5d6b75" stroke-width=".7"/><path d="M5 3.200v3.600M7.400 3v3" stroke="#5d6b75" stroke-width=".6"/></g><path d="M347.0 33.2h3.2l-1.6 1.9z" fill="#222"/><g transform="translate(355 28)"><path d="M7 1.200l5.600 5.400L7 12 1.400 6.600z" fill="none" stroke="#d23b4b" stroke-width="1.200"/><path d="M3.400 4.600L1.400 6.600l2 2M10.600 4.600l2 2-2 2" fill="none" stroke="#4fb848" stroke-width="1.300"/><circle cx="7" cy="6.600" r="2.600" fill="#fff"/></g><path d="M372.2 27V40" stroke="#b5b5b5" stroke-width=".8" stroke-dasharray=".7 1"/><g transform="translate(377 28)"><circle cx="4.600" cy="4.600" r="3.900" fill="#fff" stroke="#5d6b75" stroke-width=".8"/><path d="M7.600 7.600l4.200 4" stroke="#5d6b75" stroke-width="1.100"/><path d="M4.600 2.400v4.400M2.400 4.600h4.400" stroke="#2b8ab0" stroke-width="1"/><circle cx="4.600" cy="4.600" r="2.400" fill="none" stroke="#8cc3d8" stroke-width=".5"/></g><path d="M393.4 27V40" stroke="#b5b5b5" stroke-width=".8" stroke-dasharray=".7 1"/><g transform="translate(398.4 28)"><circle cx="4.600" cy="4.600" r="3.900" fill="#fff" stroke="#5d6b75" stroke-width=".8"/><path d="M7.600 7.600l4.200 4" stroke="#5d6b75" stroke-width="1.100"/><path d="M2.800 6.400l3.600-3.600" stroke="#7d8790" stroke-width=".7"/><path d="M2.600 2.600h3v3" fill="none" stroke="#c9d4da" stroke-width=".6"/></g><g transform="translate(415.4 28)"><circle cx="4.600" cy="4.600" r="3.900" fill="#fff" stroke="#5d6b75" stroke-width=".8"/><path d="M7.600 7.600l4.200 4" stroke="#5d6b75" stroke-width="1.100"/><circle cx="4.600" cy="4.600" r="2.200" fill="#cfdadf"/></g><g transform="translate(436.4 28)"><circle cx="4.600" cy="4.600" r="3.900" fill="#fff" stroke="#5d6b75" stroke-width=".8"/><path d="M7.600 7.600l4.200 4" stroke="#5d6b75" stroke-width="1.100"/><path d="M4.600 4.600l1.600-1.800" stroke="#7d8790" stroke-width=".6"/><circle cx="4.600" cy="4.600" r=".6" fill="#7d8790"/></g><path d="M452.4 27V40" stroke="#b5b5b5" stroke-width=".8" stroke-dasharray=".7 1"/><rect x="456.600" y="27.700" width="48" height="10.700" fill="#e2e2e2" stroke="#b4b4b4" stroke-width=".6"/><rect x="459" y="29.800" width="7" height="6.800" fill="#000"/><path d="M497.200 32.400l2 2 2-2" fill="none" stroke="#555" stroke-width=".7"/><rect x="507.200" y="27.700" width="88.600" height="10.700" fill="#e2e2e2" stroke="#b4b4b4" stroke-width=".6"/><rect x="507.800" y="28.300" width="45.600" height="9.500" fill="#fff"/><path d="M510 33.200h43" stroke="#333" stroke-width=".7"/><path d="M589.600 32.400l2 2 2-2" fill="none" stroke="#555" stroke-width=".7"/><rect x="599" y="27.700" width="65.600" height="10.700" fill="#e2e2e2" stroke="#b4b4b4" stroke-width=".6"/><rect x="602" y="28.300" width="21" height="9.500" fill="#fff"/><path d="M602 33.200h21" stroke="#7fb6d8" stroke-width=".7"/><path d="M658 32.400l2 2 2-2" fill="none" stroke="#555" stroke-width=".7"/><path d="M2.4 44.5V57.5" stroke="#b5b5b5" stroke-width=".8" stroke-dasharray=".7 1"/><g transform="translate(7 45.2)"><path d="M6 .2l5.800 2.600L6 5.400.2 2.800z" fill="#2b7a94"/><path d="M.4 5l5.600 2.500L11.600 5M.4 7l5.600 2.500L11.600 7M.4 9l5.600 2.500L11.600 9" fill="none" stroke="#46687a" stroke-width=".9"/></g><rect x="21.600" y="45.600" width="125.200" height="10.900" fill="#fff" stroke="#e0e0e0" stroke-width=".4"/><g transform="translate(24.8 46.2)"><path d="M2.800 .4a2.500 2.500 0 0 1 1.600 4.400v1.600H1.200V4.800A2.500 2.500 0 0 1 2.800.4z" fill="#f8e48a" stroke="#d6a51c" stroke-width=".7"/><path d="M1.400 7.400h2.800M1.800 8.600h2" stroke="#b48a18" stroke-width=".7"/></g><g transform="translate(34.8 48)"><circle cx="2.800" cy="2.800" r="1.700" fill="#dbe9f0"/><circle cx="2.800" cy="2.800" r="2.700" fill="none" stroke="#e3eef3" stroke-width=".8" stroke-dasharray=".8 .9"/></g><g transform="translate(42.8 46)"><rect x=".4" y="4.400" width="5.800" height="4.600" fill="#f5a11a"/><path d="M4.600 4.400V2.600a2 2 0 0 1 4 0v1" fill="none" stroke="#f5a11a" stroke-width="1"/><rect x="2.800" y="5.800" width="1" height="1.800" fill="#b06a00"/></g><g transform="translate(54 46.6)"><rect x="1.800" y=".4" width="3.800" height="2.600" fill="#fff" stroke="#4d5a66" stroke-width=".7"/><rect x=".3" y="2.800" width="6.800" height="3.600" rx=".7" fill="#fff" stroke="#4d5a66" stroke-width=".7"/><rect x="1.600" y="5" width="4.200" height="2.800" fill="#fff" stroke="#4d5a66" stroke-width=".7"/></g><rect x="63.600" y="47" width="8" height="8" fill="#000"/><ellipse cx="75.200" cy="51.200" rx="1.100" ry="1.900" fill="#7b5fd0"/><rect x="137.400" y="46.200" width="9.200" height="9.800" fill="#e6e6e6" stroke="#d0d0d0" stroke-width=".4"/><path d="M138.800 48.400h6.400l-3.200 5z" fill="#111"/><path d="M148.4 44.5V57.5" stroke="#dcdcdc" stroke-width=".7"/><g transform="translate(155 45.4)"><path d="M6 .2l5.800 2.600L6 5.400.2 2.800z" fill="#3a7f98"/><path d="M.4 5l5.600 2.500L11.600 5M.4 7l5.600 2.500L11.600 7M.4 9l5.600 2.500L11.600 9" fill="none" stroke="#46687a" stroke-width=".9"/></g><circle cx="162.600" cy="54.600" r="1" fill="#7fb4c6"/><circle cx="165.400" cy="55.400" r="1" fill="#7fb4c6"/><circle cx="159.800" cy="55.600" r=".8" fill="#7fb4c6"/><rect x="169.200" y="46.300" width="98.200" height="8.900" fill="#e2e2e2" stroke="#b4b4b4" stroke-width=".6"/><path d="M260.800 49.800l2 2 2-2" fill="none" stroke="#555" stroke-width=".7"/><path d="M270.4 44.5V57.5" stroke="#dcdcdc" stroke-width=".7"/><g transform="translate(275.6 45.4)"><circle cx="7" cy="3.400" r="2.800" fill="#1c78b4"/><path d="M1.800 11c0-3.400 2.200-5 5.200-5s5.200 1.600 5.200 5z" fill="#1c78b4"/><rect x=".6" y="2.600" width="1.300" height="3.600" fill="#1c78b4"/><rect x=".6" y=".6" width="1.300" height="1.300" fill="#1c78b4"/></g><g transform="translate(293 46.2)"><path d="M1.600 .4h9.600v2H1.600z" fill="#fff" stroke="#1c6a96" stroke-width=".6"/><path d="M.4 2.400h3.400l.8 1h6.800v6.400H.4z" fill="#1c6a96"/></g><path d="M308.4 44.5V57.5" stroke="#dcdcdc" stroke-width=".7"/><g transform="translate(313 45.6)"><path d="M3 3l6.400 6.200M9.400 3L3 9.200" stroke="#2b8ab0" stroke-width="1.200"/><circle cx="2.600" cy="2.600" r="2" fill="#fff" stroke="#2b8ab0" stroke-width=".8"/><circle cx="9.800" cy="2.600" r="2" fill="#fff" stroke="#2b8ab0" stroke-width=".8"/><circle cx="2.600" cy="9.400" r="2" fill="#fff" stroke="#6a8894" stroke-width=".8"/><circle cx="9.800" cy="9.400" r="2" fill="#fff" stroke="#6a8894" stroke-width=".8"/><rect x="4.800" y="4.600" width="2.800" height="3" fill="#2b8ab0"/></g><g transform="translate(331 45.6)"><path d="M.4 4.200L8 .4l3.400 6.800-5.600 4z" fill="#1c78b4"/><text x="3.600" y="8" font-size="5.400" font-weight="bold" fill="#fff">B</text></g><path d="M347 44.5V57.5" stroke="#dcdcdc" stroke-width=".7"/><g transform="translate(351.4 45.4)"><path d="M1.400 .4v10" stroke="#9ad02c" stroke-width="1.400"/><path d="M.6 10.200h10.600" stroke="#d21c2c" stroke-width="1.400"/><rect x=".4" y="9.400" width="1.800" height="1.700" fill="#222"/></g><g transform="translate(368 45.2)"><path d="M1.600 7.600a3.600 3.600 0 0 1 6-2.600" fill="none" stroke="#1f6a8c" stroke-width="1.700"/><path d="M8.800 3v3.400H5.400z" fill="#1f6a8c"/><path d="M8.200 8.400a3.600 3.600 0 0 1-6 2.600" fill="none" stroke="#1f6a8c" stroke-width="1.700"/><path d="M1 13V9.600h3.400z" fill="#1f6a8c"/><text x="6.600" y="3.600" font-size="4.200" fill="#4aa0c8">3D</text></g><path d="M385 44.5V57.5" stroke="#dcdcdc" stroke-width=".7"/><g transform="translate(389 47.4)"><path d="M.4 5.200l2.800-3 2.600 3 2.800-3.400 3 3.200" fill="none" stroke="#2aa79a" stroke-width=".8"/><path d="M.6 6.600l2.600-2.400 2.800 2.600L8.600 4l2.800 2.600" fill="none" stroke="#2d6f84" stroke-width=".7"/></g><g transform="translate(407 45.6)"><text x="0" y="8.400" font-size="10.500" fill="#2d3a44">A</text><rect x="6.200" y="6.400" width="4.600" height="4" fill="#4a93b0"/><path d="M6.200 7.600h4.600M6.200 9h4.600" stroke="#cfe3ea" stroke-width=".4"/></g><rect x="424" y="45.800" width="11" height="10.400" fill="#a9a9a9"/><path d="M424 48h11M424 50.400h11M424 52.800h11" stroke="#bdbdbd" stroke-width=".5"/><path d="M440 44.5V57.5" stroke="#dcdcdc" stroke-width=".7"/><g transform="translate(445 46.4)"><path d="M.6 .6h8l3 3.600-3 4.200H.6z" fill="#fff" stroke="#5d6b75" stroke-width=".9"/><path d="M3.400 8.400l2.200 1.800 5.400-5.600" fill="none" stroke="#2f9a6a" stroke-width="1.100"/></g><g transform="translate(462 46.4)"><path d="M.6 .6h7.200l3 3.800-3 3.800H.6z" fill="#fff" stroke="#5d6b75" stroke-width=".9"/></g><g transform="translate(479 46.4)"><path d="M.6 .6h7.200l3 3.400v4.600H.6z" fill="#fff" stroke="#5d6b75" stroke-width=".9"/><text x="5" y="8.600" font-size="4.200" fill="#444">15</text><path d="M1.800 7.400h2.600" stroke="#888" stroke-width=".5"/></g><path d="M494.4 44.5V57.5" stroke="#dcdcdc" stroke-width=".7"/><g transform="translate(500.6 44.8)"><text x="0" y="6.400" font-size="7.800" fill="#2b7fc0">M</text><circle cx="8.600" cy="8.600" r="2.600" fill="#fff" stroke="#333" stroke-width=".7"/><path d="M5.400 8.600h6.400M8.600 5.400v6.400" stroke="#333" stroke-width=".5"/></g><path d="M515.8 50.800000000000004h3.2l-1.6 1.9z" fill="#222"/><g transform="translate(523.6 45)"><text x="0" y="7" font-size="8.400" fill="#d22c3c">Σ</text><path d="M2.800 11l8.600-5" stroke="#444" stroke-width=".8"/><path d="M4 9.600l7-3.800" stroke="#d86a74" stroke-width=".5"/></g><path d="M538.8 50.800000000000004h3.2l-1.6 1.9z" fill="#222"/><g transform="translate(546.6 45)"><text x="0" y="7" font-size="8.400" fill="#2d3a44">Σ</text><g fill="#4ab0c8"><circle cx="3" cy="10.600" r=".7"/><circle cx="5.200" cy="9" r=".7"/><circle cx="7.400" cy="7.400" r=".7"/><circle cx="9.400" cy="5.800" r=".7"/><circle cx="11" cy="4.600" r=".6"/></g></g><path d="M561.6 50.800000000000004h3.2l-1.6 1.9z" fill="#222"/><g transform="translate(570 45)"><text x="0" y="6.800" font-size="8" fill="#2b7fc0">S</text><path d="M4 10.800l4.600-8.600 3 9.200z" fill="none" stroke="#777" stroke-width=".7"/></g><path d="M584.6 50.800000000000004h3.2l-1.6 1.9z" fill="#222"/><path d="M591 44.5V57.5" stroke="#b5b5b5" stroke-width=".8" stroke-dasharray=".7 1"/><g transform="translate(596 46)"><rect x=".5" y=".5" width="7.600" height="6.600" rx="1.400" fill="#fff" stroke="#2b7a94" stroke-width=".9"/><rect x="4" y="3.400" width="7.600" height="6.600" rx="1.400" fill="#fff" stroke="#2b7a94" stroke-width=".9"/><circle cx="3" cy="8.600" r="1.700" fill="#fff" stroke="#5d6b75" stroke-width=".7"/></g><g transform="translate(615 47.4)"><path d="M.4 5.200l2.800-3 2.600 3 2.800-3.400 3 3.200" fill="none" stroke="#2aa79a" stroke-width=".8"/><path d="M.6 6.600l2.600-2.400 2.800 2.600L8.600 4l2.800 2.600" fill="none" stroke="#2d6f84" stroke-width=".7"/></g><path d="M631.4 44.5V57.5" stroke="#dcdcdc" stroke-width=".7"/><g transform="translate(637 45.6)"><path d="M.5 .5h6l3.200 3v7.200H.5z" fill="#fff" stroke="#3d4a56" stroke-width=".9"/><rect x="2" y="6.800" width="6" height="2.600" fill="#e0a43c"/><path d="M2 6l2-1.600 1.600 1.200L7 4.400l1 1" fill="none" stroke="#888" stroke-width=".4"/></g><g transform="translate(652.6 45.8)"><rect x=".2" y=".6" width="12" height="10.200" fill="#bfe6dc"/><circle cx="3" cy="3" r="1.300" fill="#f2d684"/><path d="M.2 10.800V8l3.200-3.400 2.800 2.800 2.400-3 3.600 4v2.400z" fill="#2a9a72"/><path d="M.2 10.800v-1.600h12v1.600z" fill="#1f7a5a"/></g></svg>
<span class="t" style="top:31.07px;font-size:6.0px;line-height:6.0px;color:#222;font-weight:bold;-webkit-text-stroke:0;left:468.40px;transform:scaleX(0.906);transform-origin:left center;">Du calque</span>
<span class="t" style="top:31.07px;font-size:6.0px;line-height:6.0px;color:#222;font-weight:bold;-webkit-text-stroke:0;left:560.40px;transform:scaleX(0.909);transform-origin:left center;">Du bloc</span>
<span class="t" style="top:31.07px;font-size:6.0px;line-height:6.0px;color:#222;font-weight:bold;-webkit-text-stroke:0;left:627.20px;transform:scaleX(0.906);transform-origin:left center;">Du calque</span>
<span class="t" style="top:48.42px;font-size:6.3px;line-height:6.3px;color:#111;left:172.80px;transform:scaleX(0.856);transform-origin:left center;">Coupes</span>
<svg class="a" style="left:0;top:0" width="688" height="515" viewBox="0 0 688 515"><path d="M3 62.400h17" stroke="#b5b5b5" stroke-width=".8" stroke-dasharray=".7 1"/><g transform="translate(4 67.6)"><path d="M1 10L10.400 .8" stroke="#3d4a56" stroke-width="1"/><circle cx="1" cy="10" r="1" fill="#2b8aa5"/><circle cx="10.4" cy="0.8" r="1" fill="#2b8aa5"/></g><path d="M18.4 72.2h3.2l-1.6 1.9z" fill="#222"/><g transform="translate(6 84.6)"><path d="M1 9h8.200a3.200 3.200 0 0 0 0-6.400H7.400" fill="none" stroke="#c04a5a" stroke-width="1"/><path d="M1 9h7" stroke="#3d4a56" stroke-width="1"/><circle cx="1" cy="9" r="1" fill="#2b8aa5"/><circle cx="8.6" cy="9" r="1" fill="#2b8aa5"/><circle cx="7.4" cy="2.6" r="1" fill="#2b8aa5"/></g><g transform="translate(4 100.8)"><rect x="1" y="1" width="9.600" height="8.400" fill="none" stroke="#3d4a56" stroke-width="1"/><circle cx="1" cy="1" r="1" fill="#2b8aa5"/><circle cx="10.6" cy="9.4" r="1" fill="#2b8aa5"/></g><path d="M18.4 105.60000000000001h3.2l-1.6 1.9z" fill="#222"/><g transform="translate(4 116.4)"><path d="M1 10.600L10.400 1" stroke="#3d4a56" stroke-width="1"/><path d="M10.800 .4l-2.800.6 2.200 2.200zM.6 11l2.800-.6L1.200 8.200z" fill="#111"/></g><path d="M18.4 121.60000000000001h3.2l-1.6 1.9z" fill="#222"/><path d="M3 133H21" stroke="#dadada" stroke-width=".7"/><g transform="translate(4 138)"><path d="M1 10.400C1 5 4.400 1.400 9.600 1.200" fill="none" stroke="#3d4a56" stroke-width="1"/><circle cx="1" cy="10.4" r="1" fill="#2b8aa5"/><circle cx="9.6" cy="1.2" r="1" fill="#2b8aa5"/></g><path d="M18.4 143.6h3.2l-1.6 1.9z" fill="#222"/><g transform="translate(4 154.2)"><circle cx="5.600" cy="5.600" r="5" fill="none" stroke="#3d4a56" stroke-width="1"/><path d="M5.600 5.600l3-2.600" stroke="#2b8aa5" stroke-width=".9"/><circle cx="5.6" cy="5.6" r="1" fill="#2b8aa5"/></g><path d="M18.4 159.6h3.2l-1.6 1.9z" fill="#222"/><g transform="translate(4 169.6)"><ellipse cx="5.800" cy="5.600" rx="5.600" ry="4.200" transform="rotate(-35 5.800 5.600)" fill="none" stroke="#3d4a56" stroke-width="1"/><path d="M2.600 8.400l6.400-5.600" stroke="#2b8aa5" stroke-width=".9"/><circle cx="5.8" cy="5.6" r="1" fill="#2b8aa5"/></g><path d="M18.4 175.2h3.2l-1.6 1.9z" fill="#222"/><path d="M3 184H21" stroke="#dadada" stroke-width=".7"/><g transform="translate(6.4 190.6)"><path d="M1 10.400c.4-5 1-9.400 2.200-9.400 1.600 0 2.600 9 5 9 1.400 0 1.800-5 2-9.200" fill="none" stroke="#2b7a94" stroke-width="1.100"/></g><g transform="translate(8 210.4)"><circle cx="1.600" cy="1.800" r=".9" fill="#3d4a56"/></g><path d="M18.4 211.6h3.2l-1.6 1.9z" fill="#222"/><path d="M3 221H21" stroke="#dadada" stroke-width=".7"/><g transform="translate(3.6 227)"><rect x="1.600" y="1.600" width="8.400" height="8.400" fill="#a8d3de"/><path d="M1.600 0v11.600M10 0v11.600M0 1.600h11.600M0 10h11.600" stroke="#3d5a6a" stroke-width=".8"/></g><path d="M18.4 232.2h3.2l-1.6 1.9z" fill="#222"/><g transform="translate(3.4 244)"><text x="0" y="9.600" font-size="11.500" fill="#222">A</text><path d="M10.200 1.400v8.600" stroke="#6aaec4" stroke-width="1.300"/></g><path d="M18.4 249.6h3.2l-1.6 1.9z" fill="#222"/><g transform="translate(6.4 259.6)"><rect x=".6" y=".6" width="6.400" height="5.600" fill="#fff" stroke="#3d4a56" stroke-width=".9"/><circle cx="7.800" cy="7.400" r="2.400" fill="#fff" stroke="#2b7a94" stroke-width=".9"/></g><path d="M3 275H21" stroke="#dadada" stroke-width=".7"/><g transform="translate(4.4 282)"><path d="M.8 .4v10M11.200 .4v10" stroke="#2b7a94" stroke-width="1.200"/><path d="M1.400 5.400h9.200" stroke="#3d4a56" stroke-width=".8"/><path d="M1 5.400l2.200-1.200v2.400zM11 5.400L8.800 4.200v2.400z" fill="#3d4a56"/></g><g transform="translate(3 299)"><path d="M.6 1l3.200 6.200 4.600-1.200 2.800 4.400" fill="none" stroke="#2b7a94" stroke-width=".9"/><path d="M2.600 2.600l-1.400 4M9.600 5.600l-1.400 4.600" stroke="#3d4a56" stroke-width=".7"/></g><path d="M18.4 304.2h3.2l-1.6 1.9z" fill="#222"/><g transform="translate(6.8 316)"><path d="M1 11C1 6 4 3 8.800 3" fill="none" stroke="#3d4a56" stroke-width="1.100"/><path d="M7.600 .8L10.600 3l-3 2.200z" fill="#3d4a56"/><path d="M3.600 11c0-3 1.600-5 4.800-5.200" fill="none" stroke="#6aaec4" stroke-width=".8"/></g><path d="M3 331H21" stroke="#dadada" stroke-width=".7"/><g transform="translate(5.8 336.6)"><path d="M10.400 10.400H1.200L8.600 1.400" fill="none" stroke="#3d4a56" stroke-width="1"/><path d="M5.600 10.400a4.400 4.400 0 0 0-1.600-3.400" fill="none" stroke="#2b7a94" stroke-width=".8"/></g><g transform="translate(3.8 352.4)"><circle cx="5.400" cy="5.800" r="5" fill="none" stroke="#3d4a56" stroke-width="1"/><path d="M5.400 5.800L2.600 2.600" stroke="#2b7a94" stroke-width=".9"/></g><path d="M18.4 357.8h3.2l-1.6 1.9z" fill="#222"/><path d="M3 367H21" stroke="#dadada" stroke-width=".7"/><g transform="translate(3.6 372.4)"><path d="M.8 0v11M5.800 0v11M10.800 0v11" stroke="#3d5a6a" stroke-width="1.100"/><path d="M.8 5.400h10" stroke="#8ab8c6" stroke-width=".9"/></g><path d="M18.4 377.4h3.2l-1.6 1.9z" fill="#222"/><path d="M3 387H21" stroke="#dadada" stroke-width=".7"/><g transform="translate(6.6 392.4)"><path d="M1 11C1.600 6 5 3.400 9.400 1.600" fill="none" stroke="#222" stroke-width="1.100"/><circle cx="1.200" cy="10.800" r="1" fill="#222"/><circle cx="9.200" cy="1.600" r="1" fill="#222"/><circle cx="6.600" cy="7.400" r="1.300" fill="#f4b44a"/></g><path d="M667.5 62h18" stroke="#b5b5b5" stroke-width=".8" stroke-dasharray=".7 1"/><g transform="translate(672.1999999999999 68.4)"><g transform="rotate(-32 5 4.500)"><rect x="-.4" y="1.800" width="10.800" height="5.400" rx="1.400" fill="#f6c820"/><path d="M1 1.800h2.600v5.400H1a1.400 1.400 0 0 1-1.400-1.400v-2.600A1.400 1.400 0 0 1 1 1.800z" fill="#b4350f"/></g><path d="M1.600 9h8" stroke="#aab" stroke-width=".5"/></g><g transform="translate(672.1999999999999 84)"><g transform="rotate(-32 5 4.500)"><rect x="-.4" y="1.800" width="10.800" height="5.400" rx="1.400" fill="#f6c820"/><path d="M1 1.800h2.600v5.400H1a1.400 1.400 0 0 1-1.400-1.400v-2.600A1.400 1.400 0 0 1 1 1.800z" fill="#b4350f"/></g><path d="M1.600 9h8" stroke="#aab" stroke-width=".5"/><g transform="rotate(38 3 2)"><rect x="-1" y=".4" width="6.600" height="2.400" rx="1" fill="#2b7a9a"/></g></g><path d="M667.5 97.6H686" stroke="#dadada" stroke-width=".7"/><g transform="translate(670.1999999999999 104.6)"><path d="M5.800 .6v10.400M.6 5.800h10.400" stroke="#333" stroke-width=".9"/><path d="M5.800 0l1.600 2H4.200zM5.800 11.600l1.600-2H4.200zM0 5.800l2-1.600v3.200zM11.600 5.800l-2-1.600v3.200z" fill="#333"/></g><g transform="translate(670.4 121)"><path d="M.6 .6h10v10" fill="none" stroke="#2b7a94" stroke-width=".9"/><rect x=".6" y="3.400" width="7.400" height="7.400" fill="#fff" stroke="#3d4a56" stroke-width=".9"/></g><g transform="translate(670.8 137)"><path d="M8.200 1.600a4.800 4.800 0 1 1-5 .4" fill="none" stroke="#333" stroke-width=".9"/><path d="M2 .2l2.600 1.600L2.400 4z" fill="#333"/></g><path d="M667.5 153H686" stroke="#dadada" stroke-width=".7"/><g transform="translate(671.0 157.6)"><rect x=".6" y=".6" width="7.600" height="4.400" fill="#fff" stroke="#3d5a6a" stroke-width=".9"/><rect x=".6" y="6.200" width="7.600" height="4.400" fill="#d8e8ee" stroke="#3d5a6a" stroke-width=".9"/></g><g transform="translate(670.4 174)"><path d="M.6 11V.8l4.600 10.200z" fill="#fff" stroke="#3d5a6a" stroke-width=".9"/><path d="M6.400 3.400l4.400 7.600H6.400z" fill="#cfe3ea" stroke="#3d5a6a" stroke-width=".7"/><path d="M5.600 0v11.600" stroke="#888" stroke-width=".4" stroke-dasharray="1 .8"/></g><g transform="translate(670.4 191)"><path d="M1 10L10 1.400" stroke="#555" stroke-width=".8"/><circle cx="1.200" cy="9.800" r="1" fill="#2b7a94"/><circle cx="9.800" cy="1.600" r="1" fill="#2b7a94"/></g><path d="M667.5 206H686" stroke="#dadada" stroke-width=".7"/><g transform="translate(670.4 210.6)"><circle cx="2.400" cy="2.600" r="1.900" fill="#222"/><circle cx="7.400" cy="4.400" r="2.200" fill="#2b8ab0"/><circle cx="8.200" cy="9" r="2" fill="#fff" stroke="#2b8ab0" stroke-width=".8"/><path d="M4 1.600c3-.8 5.400.6 6 2.600" fill="none" stroke="#6aaec4" stroke-width=".7"/></g><g transform="translate(670.4 226.6)"><rect x=".6" y=".6" width="6.400" height="5.400" fill="#fff" stroke="#3d4a56" stroke-width=".8"/><rect x="4.400" y="4" width="6" height="6.400" fill="#fff" stroke="#3d4a56" stroke-width=".8"/><text x="5.600" y="9.400" font-size="4.600" fill="#333">3</text></g><g transform="translate(670.0 244.4)"><path d="M6 .8l5.400 10.400H.6z" fill="#fff" stroke="#3d4a56" stroke-width=".9"/><path d="M6 .8v10.400" stroke="#3d4a56" stroke-width=".7"/></g><g transform="translate(668.4 262)"><path d="M3.400 1.200h8.400v2.200H3.400a1.800 1.800 0 0 0 0 3.600h8.400v2.200H3.400a4 4 0 0 1 0-8z" fill="#4d6876"/></g><path d="M683.0 265.59999999999997h3.2l-1.6 1.9z" fill="#222"/><g transform="translate(668.8 276.6)"><rect x="0" y="0" width="5.400" height="5.400" fill="#2d4a5a"/><rect x="6.400" y="0" width="5.400" height="5.400" fill="#2b8ab0"/><rect x="0" y="6.400" width="5.400" height="5.400" fill="#2d4a5a"/><rect x="6.400" y="6.400" width="5.400" height="5.400" fill="#2d4a5a"/></g><path d="M683.0 282.0h3.2l-1.6 1.9z" fill="#222"/><path d="M667.5 292H686" stroke="#dadada" stroke-width=".7"/><g transform="translate(668.4 298)"><path d="M0 5.600h4.400M7.600 5.600h4.600" stroke="#666" stroke-width=".8"/><path d="M3.400 10L8.800 .8" stroke="#2b8ab0" stroke-width=".9"/></g><path d="M683.0 302.4h3.2l-1.6 1.9z" fill="#222"/><g transform="translate(668.4 315)"><path d="M1 2.800v7h10.400v-7" fill="none" stroke="#3d4a56" stroke-width=".9"/><path d="M1 2.800h3M8.400 2.800h3" stroke="#3d4a56" stroke-width=".9"/><circle cx="4.400" cy="2.800" r=".8" fill="#2b8ab0"/><circle cx="8" cy="2.800" r=".8" fill="#2b8ab0"/></g><path d="M683.0 319.59999999999997h3.2l-1.6 1.9z" fill="#222"/><g transform="translate(668.4 330.6)"><path d="M1 11V6.400C1 3 3.400 1 7 1h4.600" fill="none" stroke="#3d4a56" stroke-width="1"/></g><path d="M683.0 335.59999999999997h3.2l-1.6 1.9z" fill="#222"/><path d="M667.5 346H686" stroke="#dadada" stroke-width=".7"/><g transform="translate(670.0 352.4)"><path d="M2.200 9.600h7a2.600 2.600 0 0 0 .4-5.200A3.400 3.400 0 0 0 3 3.600 3 3 0 0 0 2.200 9.600z" fill="#fff" stroke="#e0a43c" stroke-width=".9"/><path d="M1 10.400h9.600" stroke="#999" stroke-width=".5"/></g><g transform="translate(670.8 369.4)"><path d="M4.800 .6v4.800M2.400 3.400l2.400 2.400 2.400-2.400" fill="none" stroke="#2b7a94" stroke-width=".9"/><rect x=".4" y="6.800" width="9" height="2" fill="#3d4a56"/><path d="M.4 10.400h9" stroke="#3d4a56" stroke-width=".7"/></g><g transform="translate(672.4 384.6)"><path d="M4.200 .4l2.400.8L4 10.600l-2 1.800-.4-2.600z" fill="#2b9ac0"/><path d="M1.600 9.800l.4 2.600 2-1.800z" fill="#f2c544"/></g><path d="M667.5 402H686" stroke="#dadada" stroke-width=".7"/><g transform="translate(668.4 406)"><rect x=".4" y=".6" width="5.800" height="10" fill="#3d4a56"/><rect x="1.400" y="4.600" width="3.800" height="5" fill="#9fd0a0"/><path d="M7.600 3.200l4 2.800-4 2.600z" fill="#fff" stroke="#3d4a56" stroke-width=".7"/></g><path d="M683.0 411.2h3.2l-1.6 1.9z" fill="#222"/><g transform="translate(668.8 421.6)"><rect x=".4" y=".4" width="6.400" height="6" fill="#1f4a66"/><rect x="4.600" y="4.400" width="6.400" height="6" fill="#2b8ab0" stroke="#1f4a66" stroke-width=".5"/></g><path d="M683.0 426.8h3.2l-1.6 1.9z" fill="#222"/><g transform="translate(668.8 438)"><rect x=".6" y=".6" width="5.600" height="5.200" fill="#fff" stroke="#3d4a56" stroke-width=".8"/><circle cx="3.600" cy="9.400" r="2.400" fill="#fff" stroke="#3d4a56" stroke-width=".8"/><path d="M8.400 10.800l2.600-5 .8 5z" fill="#fff" stroke="#3d4a56" stroke-width=".7"/></g><path d="M683.0 443.59999999999997h3.2l-1.6 1.9z" fill="#222"/><g transform="translate(669.8 455.4)"><rect x="-1" y="-.6" width="10.400" height="10.600" fill="#e6eaec"/><path d="M.6 .6h4.800l2.600 2.600v5.800H.6z" fill="#f4fafc" stroke="#6d8a98" stroke-width=".8"/><path d="M5.400 .6v2.600H8" fill="none" stroke="#6d8a98" stroke-width=".6"/></g><path d="M683.0 460.2h3.2l-1.6 1.9z" fill="#222"/><g transform="translate(668.8 477)"><path d="M.5 0v9.600M10.100 0v9.600" stroke="#3d4a56" stroke-width=".8"/><path d="M.5 3.200h9.600" stroke="#3d4a56" stroke-width=".6"/><rect x="1" y="5.400" width="8.600" height="3" fill="#f2c544"/></g><path d="M683.0 480.8h3.2l-1.6 1.9z" fill="#222"/></svg>
</div>
</body></html>
